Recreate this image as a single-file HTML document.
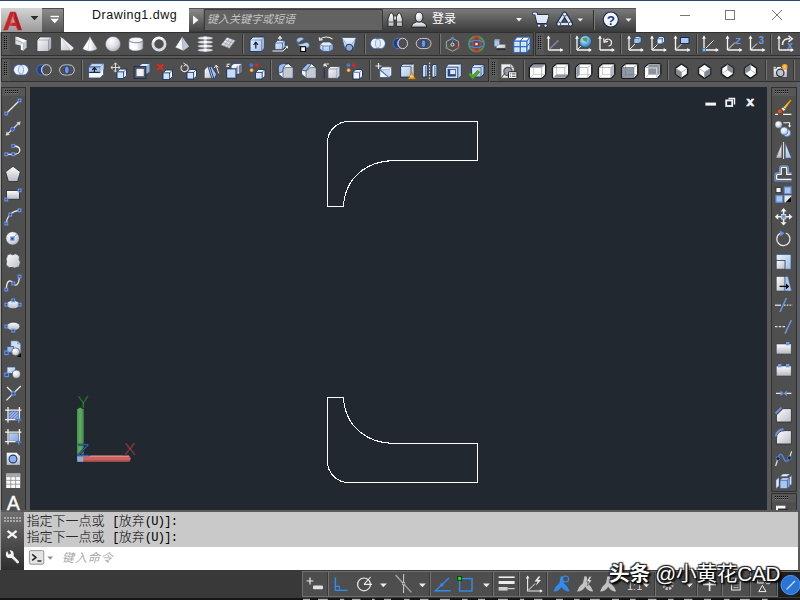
<!DOCTYPE html><html lang="zh"><head><meta charset="utf-8"><title>Drawing1.dwg</title><style>
*{box-sizing:border-box;margin:0;padding:0}
html,body{width:800px;height:600px;overflow:hidden;background:#5a5a5a;font-family:"Liberation Sans","Noto Sans CJK SC",sans-serif}
.abs{position:absolute}
#top{left:0;top:0;width:800px;height:32px;background:#fff}
#topline{left:0;top:0;width:800px;height:1px;background:#2b4a6e}
#abtn{left:1px;top:8px;width:41px;height:24px;background:linear-gradient(#d4d4d4,#9a9a9a)}
#qbtn{left:42px;top:8px;width:22px;height:24px;background:linear-gradient(#8c8c8c,#555);border-top:1px solid #4c4c4c;border-right:1px solid #4c4c4c}
#title{left:92px;top:8.3px;font-size:12.5px;line-height:14px;letter-spacing:0.5px;color:#111}
#info{left:189px;top:8px;width:447px;height:24px;background:linear-gradient(#7a7a7a,#3a3a3a);border-top:1px solid #555}
#sarrow{left:189px;top:9px;width:14px;height:22px;background:linear-gradient(#8a8a8a,#444)}
#sbox{left:204px;top:9px;width:179px;height:22px;background:#626262;border:1px solid #3c3c3c;color:#c4c4c4;font-size:11px;font-style:italic;line-height:18.5px;padding-left:2px;white-space:nowrap}
#login{left:432px;top:11px;font-size:12px;color:#fff;line-height:17px}
.tb{background:#4f4f4f;border:1px solid #303030;height:24px}
.grip{width:5px;height:15px;background-image:radial-gradient(circle,#1c1c1c 0.7px,transparent 0.9px);background-size:2px 2px}
.gripbg{background:#585858}
.sep{background:#353535;border-right:1px solid #747474;width:2px}
#draw{left:30px;top:87px;width:737px;height:423px;background:#212830}
#ltb{left:1px;top:87px;width:25px;height:426px;background:#4f4f4f;border:1px solid #303030}
#rtb{left:771px;top:87px;width:26px;height:405px;background:#4f4f4f;border:1px solid #303030}
#rtb2{left:771px;top:493px;width:26px;height:20px;background:#4f4f4f;border:1px solid #303030}
#cmdl{left:1px;top:512px;width:23px;height:58px;background:linear-gradient(#707070,#2e2e2e)}
#hist{left:24px;top:512px;width:774px;height:35px;background:#c9c9c9;color:#000;font-weight:300;font-size:13px;line-height:15px;padding:2.3px 0 0 2.5px;white-space:pre;font-family:"Liberation Mono","Noto Sans CJK SC",monospace}
#hist i{font-style:normal;font-size:12px;letter-spacing:-0.7px}
#inp{left:24px;top:547px;width:774px;height:23px;background:#fff}
#inptxt{left:62px;top:549px;font-size:12px;font-style:italic;color:#a8a8a8;line-height:18px;letter-spacing:0.9px}
#status{left:0;top:570px;width:800px;height:30px;background:#393939}
#sbar{left:302px;top:571px;width:498px;height:26px;background:#4e4e4e;border:1px solid #707070;border-right:0}
#wm{left:609px;top:559px;font-size:20.6px;color:#fff;white-space:nowrap;line-height:30px;text-shadow:1px 1px 1px #000,-1px -1px 1px #222,1px -1px 1px #222,-1px 1px 1px #222,2px 2px 2px #000;letter-spacing:-0.2px}
svg{position:absolute;left:0;top:0;overflow:visible}
</style></head><body>
<div class="abs" style="left:0;top:32px;width:1px;height:568px;background:#a0a0a0"></div><div class="abs" style="left:797px;top:32px;width:3px;height:480px;background:#5c6066"></div>
<div class="abs" id="top"></div><div class="abs" id="topline"></div>
<div class="abs" id="abtn"></div><div class="abs" id="qbtn"></div>
<div class="abs" id="title">Drawing1.dwg</div>
<div class="abs" id="info"></div><div class="abs" id="sarrow"></div><div class="abs" id="sbox">键入关键字或短语</div>
<div class="abs" id="login">登录</div>
<div class="abs tb" style="left:1px;top:32px;width:533px;height:24px"></div>
<div class="abs tb" style="left:535px;top:32px;width:270px;height:24px"></div>
<div class="abs tb" style="left:1px;top:58px;width:488px;height:24px"></div>
<div class="abs tb" style="left:490px;top:58px;width:315px;height:24px"></div>
<div class="abs sep" style="left:242px;top:34px;height:20px"></div>
<div class="abs sep" style="left:364px;top:34px;height:20px"></div>
<div class="abs sep" style="left:439px;top:34px;height:20px"></div>
<div class="abs sep" style="left:569px;top:34px;height:20px"></div>
<div class="abs sep" style="left:620px;top:34px;height:20px"></div>
<div class="abs sep" style="left:696px;top:34px;height:20px"></div>
<div class="abs sep" style="left:770px;top:34px;height:20px"></div>
<div class="abs sep" style="left:81px;top:60px;height:20px"></div>
<div class="abs sep" style="left:270px;top:60px;height:20px"></div>
<div class="abs sep" style="left:369px;top:60px;height:20px"></div>
<div class="abs sep" style="left:523px;top:60px;height:20px"></div>
<div class="abs sep" style="left:667px;top:60px;height:20px"></div>
<div class="abs sep" style="left:765px;top:60px;height:20px"></div>
<div class="abs sep" style="left:793px;top:60px;height:20px"></div>
<div class="abs" id="draw"></div>
<div class="abs" id="ltb"></div><div class="abs" id="rtb"></div><div class="abs" id="rtb2"></div>
<div class="abs" style="left:1px;top:510px;width:799px;height:2px;background:#5a5a5a"></div>
<div class="abs" id="cmdl"></div>
<div class="abs" id="hist">指定下一点或 <i>[</i>放弃<i>(U)]:</i>
指定下一点或 <i>[</i>放弃<i>(U)]:</i></div>
<div class="abs" id="inp"></div><div class="abs" id="inptxt">键入命令</div>
<div class="abs" id="status"></div><div class="abs" id="sbar"></div>
<svg width="800" height="600" viewBox="0 0 800 600">
<defs>
<linearGradient id="gW" x1="0" y1="0" x2="1" y2="1"><stop offset="0" stop-color="#ffffff"/><stop offset="1" stop-color="#b9bdc6"/></linearGradient>
<linearGradient id="gWv" x1="0" y1="0" x2="0" y2="1"><stop offset="0" stop-color="#ffffff"/><stop offset="1" stop-color="#b4b8c2"/></linearGradient>
<linearGradient id="gWh" x1="0" y1="0" x2="1" y2="0"><stop offset="0" stop-color="#fafafa"/><stop offset="0.5" stop-color="#ffffff"/><stop offset="1" stop-color="#b4b8c2"/></linearGradient>
<linearGradient id="gB" x1="0" y1="0" x2="1" y2="1"><stop offset="0" stop-color="#eef5fd"/><stop offset="1" stop-color="#9ebde8"/></linearGradient>
<linearGradient id="gBv" x1="0" y1="0" x2="0" y2="1"><stop offset="0" stop-color="#f2f7fd"/><stop offset="1" stop-color="#a9c4ea"/></linearGradient>
<radialGradient id="gS" cx="0.38" cy="0.32" r="0.7"><stop offset="0" stop-color="#ffffff"/><stop offset="0.6" stop-color="#dcdee4"/><stop offset="1" stop-color="#a9adb8"/></radialGradient>
<radialGradient id="gSb" cx="0.38" cy="0.32" r="0.7"><stop offset="0" stop-color="#ffffff"/><stop offset="0.6" stop-color="#cfe0f6"/><stop offset="1" stop-color="#8fb0e0"/></radialGradient>
<radialGradient id="gGlobe" cx="0.4" cy="0.35" r="0.7"><stop offset="0" stop-color="#d8f0ff"/><stop offset="0.6" stop-color="#5fa6d8"/><stop offset="1" stop-color="#2b6aa0"/></radialGradient>
<linearGradient id="gBrush" x1="0" y1="1" x2="1" y2="0"><stop offset="0" stop-color="#f7d56a"/><stop offset="1" stop-color="#c98a1c"/></linearGradient>
</defs>
<rect x="2" y="33" width="8" height="22" fill="#575757"/><rect x="4" y="36" width="1" height="1" fill="#101010"/><rect x="5" y="37" width="1" height="1" fill="#6e6e6e"/><rect x="6" y="36" width="1" height="1" fill="#101010"/><rect x="7" y="37" width="1" height="1" fill="#6e6e6e"/><rect x="4" y="38" width="1" height="1" fill="#101010"/><rect x="5" y="39" width="1" height="1" fill="#6e6e6e"/><rect x="6" y="38" width="1" height="1" fill="#101010"/><rect x="7" y="39" width="1" height="1" fill="#6e6e6e"/><rect x="4" y="40" width="1" height="1" fill="#101010"/><rect x="5" y="41" width="1" height="1" fill="#6e6e6e"/><rect x="6" y="40" width="1" height="1" fill="#101010"/><rect x="7" y="41" width="1" height="1" fill="#6e6e6e"/><rect x="4" y="42" width="1" height="1" fill="#101010"/><rect x="5" y="43" width="1" height="1" fill="#6e6e6e"/><rect x="6" y="42" width="1" height="1" fill="#101010"/><rect x="7" y="43" width="1" height="1" fill="#6e6e6e"/><rect x="4" y="44" width="1" height="1" fill="#101010"/><rect x="5" y="45" width="1" height="1" fill="#6e6e6e"/><rect x="6" y="44" width="1" height="1" fill="#101010"/><rect x="7" y="45" width="1" height="1" fill="#6e6e6e"/><rect x="4" y="46" width="1" height="1" fill="#101010"/><rect x="5" y="47" width="1" height="1" fill="#6e6e6e"/><rect x="6" y="46" width="1" height="1" fill="#101010"/><rect x="7" y="47" width="1" height="1" fill="#6e6e6e"/><rect x="4" y="48" width="1" height="1" fill="#101010"/><rect x="5" y="49" width="1" height="1" fill="#6e6e6e"/><rect x="6" y="48" width="1" height="1" fill="#101010"/><rect x="7" y="49" width="1" height="1" fill="#6e6e6e"/><rect x="536" y="33" width="8" height="22" fill="#575757"/><rect x="538" y="36" width="1" height="1" fill="#101010"/><rect x="539" y="37" width="1" height="1" fill="#6e6e6e"/><rect x="540" y="36" width="1" height="1" fill="#101010"/><rect x="541" y="37" width="1" height="1" fill="#6e6e6e"/><rect x="538" y="38" width="1" height="1" fill="#101010"/><rect x="539" y="39" width="1" height="1" fill="#6e6e6e"/><rect x="540" y="38" width="1" height="1" fill="#101010"/><rect x="541" y="39" width="1" height="1" fill="#6e6e6e"/><rect x="538" y="40" width="1" height="1" fill="#101010"/><rect x="539" y="41" width="1" height="1" fill="#6e6e6e"/><rect x="540" y="40" width="1" height="1" fill="#101010"/><rect x="541" y="41" width="1" height="1" fill="#6e6e6e"/><rect x="538" y="42" width="1" height="1" fill="#101010"/><rect x="539" y="43" width="1" height="1" fill="#6e6e6e"/><rect x="540" y="42" width="1" height="1" fill="#101010"/><rect x="541" y="43" width="1" height="1" fill="#6e6e6e"/><rect x="538" y="44" width="1" height="1" fill="#101010"/><rect x="539" y="45" width="1" height="1" fill="#6e6e6e"/><rect x="540" y="44" width="1" height="1" fill="#101010"/><rect x="541" y="45" width="1" height="1" fill="#6e6e6e"/><rect x="538" y="46" width="1" height="1" fill="#101010"/><rect x="539" y="47" width="1" height="1" fill="#6e6e6e"/><rect x="540" y="46" width="1" height="1" fill="#101010"/><rect x="541" y="47" width="1" height="1" fill="#6e6e6e"/><rect x="538" y="48" width="1" height="1" fill="#101010"/><rect x="539" y="49" width="1" height="1" fill="#6e6e6e"/><rect x="540" y="48" width="1" height="1" fill="#101010"/><rect x="541" y="49" width="1" height="1" fill="#6e6e6e"/><rect x="2" y="59" width="8" height="22" fill="#575757"/><rect x="4" y="62" width="1" height="1" fill="#101010"/><rect x="5" y="63" width="1" height="1" fill="#6e6e6e"/><rect x="6" y="62" width="1" height="1" fill="#101010"/><rect x="7" y="63" width="1" height="1" fill="#6e6e6e"/><rect x="4" y="64" width="1" height="1" fill="#101010"/><rect x="5" y="65" width="1" height="1" fill="#6e6e6e"/><rect x="6" y="64" width="1" height="1" fill="#101010"/><rect x="7" y="65" width="1" height="1" fill="#6e6e6e"/><rect x="4" y="66" width="1" height="1" fill="#101010"/><rect x="5" y="67" width="1" height="1" fill="#6e6e6e"/><rect x="6" y="66" width="1" height="1" fill="#101010"/><rect x="7" y="67" width="1" height="1" fill="#6e6e6e"/><rect x="4" y="68" width="1" height="1" fill="#101010"/><rect x="5" y="69" width="1" height="1" fill="#6e6e6e"/><rect x="6" y="68" width="1" height="1" fill="#101010"/><rect x="7" y="69" width="1" height="1" fill="#6e6e6e"/><rect x="4" y="70" width="1" height="1" fill="#101010"/><rect x="5" y="71" width="1" height="1" fill="#6e6e6e"/><rect x="6" y="70" width="1" height="1" fill="#101010"/><rect x="7" y="71" width="1" height="1" fill="#6e6e6e"/><rect x="4" y="72" width="1" height="1" fill="#101010"/><rect x="5" y="73" width="1" height="1" fill="#6e6e6e"/><rect x="6" y="72" width="1" height="1" fill="#101010"/><rect x="7" y="73" width="1" height="1" fill="#6e6e6e"/><rect x="4" y="74" width="1" height="1" fill="#101010"/><rect x="5" y="75" width="1" height="1" fill="#6e6e6e"/><rect x="6" y="74" width="1" height="1" fill="#101010"/><rect x="7" y="75" width="1" height="1" fill="#6e6e6e"/><rect x="490" y="59" width="8" height="22" fill="#575757"/><rect x="492" y="62" width="1" height="1" fill="#101010"/><rect x="493" y="63" width="1" height="1" fill="#6e6e6e"/><rect x="494" y="62" width="1" height="1" fill="#101010"/><rect x="495" y="63" width="1" height="1" fill="#6e6e6e"/><rect x="492" y="64" width="1" height="1" fill="#101010"/><rect x="493" y="65" width="1" height="1" fill="#6e6e6e"/><rect x="494" y="64" width="1" height="1" fill="#101010"/><rect x="495" y="65" width="1" height="1" fill="#6e6e6e"/><rect x="492" y="66" width="1" height="1" fill="#101010"/><rect x="493" y="67" width="1" height="1" fill="#6e6e6e"/><rect x="494" y="66" width="1" height="1" fill="#101010"/><rect x="495" y="67" width="1" height="1" fill="#6e6e6e"/><rect x="492" y="68" width="1" height="1" fill="#101010"/><rect x="493" y="69" width="1" height="1" fill="#6e6e6e"/><rect x="494" y="68" width="1" height="1" fill="#101010"/><rect x="495" y="69" width="1" height="1" fill="#6e6e6e"/><rect x="492" y="70" width="1" height="1" fill="#101010"/><rect x="493" y="71" width="1" height="1" fill="#6e6e6e"/><rect x="494" y="70" width="1" height="1" fill="#101010"/><rect x="495" y="71" width="1" height="1" fill="#6e6e6e"/><rect x="492" y="72" width="1" height="1" fill="#101010"/><rect x="493" y="73" width="1" height="1" fill="#6e6e6e"/><rect x="494" y="72" width="1" height="1" fill="#101010"/><rect x="495" y="73" width="1" height="1" fill="#6e6e6e"/><rect x="492" y="74" width="1" height="1" fill="#101010"/><rect x="493" y="75" width="1" height="1" fill="#6e6e6e"/><rect x="494" y="74" width="1" height="1" fill="#101010"/><rect x="495" y="75" width="1" height="1" fill="#6e6e6e"/><g transform="translate(13,36)"><path d="M2.4 0.8 L13.6 4.4 L13.6 11.4 L10.4 14.8 L7.8 13.8 L7.8 9.4 L2.4 8.2 Z" fill="#f4f5f8" stroke="#3a3f48" stroke-width="0.9" stroke-linejoin="round"/><path d="M2.4 0.8 L13.6 4.4 L10.4 7 L7.8 9.4 L2.4 8.2 Z" fill="#d9dce3"/><path d="M2.4 0.8 L4.6 0.9 L13.6 4.4 L10.4 7 Z" fill="#fdfdfe"/><path d="M10.4 7 L13.6 4.4 L13.6 11.4 L10.4 14.8 Z" fill="#c4c8d2"/><path d="M7.8 9.4 L10.4 7 L10.4 14.8 L7.8 13.8 Z" fill="#fafbfc"/><path d="M10.4 7 L10.4 14.8 M10.4 7 L2.6 4" fill="none" stroke="#8a8f99" stroke-width="0.6"/></g><g transform="translate(36,36)"><path d="M1 4 L4 1 L15.5 1 L15.5 12 L12.5 15.5 L1 15.5 Z" fill="url(#gW)" stroke="#3a3f48" stroke-width="0.8" stroke-linejoin="round"/><path d="M1 4 L12.5 4 L12.5 15.5 M12.5 4 L15.5 1" fill="none" stroke="#3a3f48" stroke-width="0.6400000000000001" opacity="0.55"/><path d="M12.5 4 L15.5 1 L15.5 12 L12.5 15.5 Z" fill="#8f95a3" opacity="0.45"/></g><g transform="translate(59,36)"><path d="M1.5 1 L4 2.5 L15 12 L12 14.8 L1.5 14.8 Z" fill="url(#gW)" stroke="#4a4f58" stroke-width="0.8" stroke-linejoin="round"/><path d="M1.5 1 L12 14.8" stroke="#a8acb6" stroke-width="0.7"/><path d="M1.5 1 L4 2.5 L15 12 L12 14.8 Z" fill="#fff" opacity="0.6"/></g><g transform="translate(82,36)"><path d="M8 0.8 L15.3 12.2 A7.3 3 0 0 1 0.7 12.2 Z" fill="url(#gWh)" stroke="#50555e" stroke-width="0.7" stroke-linejoin="round"/><path d="M8 0.8 L6 14.9" stroke="#d0d3da" stroke-width="0.8"/></g><g transform="translate(105,36)"><circle cx="8" cy="8" r="7.6" fill="url(#gS)" stroke="#5a5f68" stroke-width="0.6"/></g><g transform="translate(128,36)"><path d="M0.8 4 L0.8 12 A7.2 3 0 0 0 15.2 12 L15.2 4 Z" fill="url(#gWh)" stroke="#50555e" stroke-width="0.7"/><ellipse cx="8" cy="4" rx="7.2" ry="2.8" fill="#f4f5f8" stroke="#50555e" stroke-width="0.7"/><rect x="4" y="7" width="2.5" height="7.5" fill="#fff" opacity="0.7"/></g><g transform="translate(151,36)"><circle cx="8" cy="8" r="6.1" fill="none" stroke="#4a4f58" stroke-width="4"/><circle cx="8" cy="8" r="6.1" fill="none" stroke="#d9dbe1" stroke-width="2.8"/><path d="M2.6 5.2 A6.1 6.1 0 0 1 11 2.7" fill="none" stroke="#fff" stroke-width="2.2" stroke-linecap="round"/></g><g transform="translate(174,36)"><path d="M8 0.8 L15 10.5 L9 14.8 L1 11.5 Z" fill="#f6f7f9" stroke="#4a4f58" stroke-width="0.7" stroke-linejoin="round"/><path d="M8 0.8 L15 10.5 L9 14.8 Z" fill="#c2c6d0"/><path d="M8 0.8 L9 14.8" stroke="#8a8f99" stroke-width="0.6"/></g><g transform="translate(197,36)"><rect x="7" y="0.5" width="2.6" height="15.5" fill="url(#gWh)" stroke="#6a6f78" stroke-width="0.4"/><ellipse cx="8.3" cy="2.2" rx="7.6" ry="1.6" fill="#dfe1e6" stroke="#6f747d" stroke-width="0.4"/><rect x="6.6" y="0.8000000000000003" width="3.4" height="2.4" fill="#fff" opacity="0.85"/><ellipse cx="8.3" cy="6.2" rx="7.6" ry="1.6" fill="#dfe1e6" stroke="#6f747d" stroke-width="0.4"/><rect x="6.6" y="4.800000000000001" width="3.4" height="2.4" fill="#fff" opacity="0.85"/><ellipse cx="8.3" cy="10.2" rx="7.6" ry="1.6" fill="#dfe1e6" stroke="#6f747d" stroke-width="0.4"/><rect x="6.6" y="8.799999999999999" width="3.4" height="2.4" fill="#fff" opacity="0.85"/><ellipse cx="8.3" cy="14.2" rx="7.6" ry="1.6" fill="#dfe1e6" stroke="#6f747d" stroke-width="0.4"/><rect x="6.6" y="12.799999999999999" width="3.4" height="2.4" fill="#fff" opacity="0.85"/></g><g transform="translate(220,36)"><path d="M0.8 9 L7 1.2 L15.5 4.5 L9.5 12.5 Z" fill="url(#gW)" stroke="#5a5f68" stroke-width="0.7" stroke-linejoin="round"/><path d="M2.9 6.4 L11.5 9.8 M5 3.8 L13.5 7.2 M3.8 10.2 L10 2.4 M6.7 11.4 L12.8 3.5" stroke="#8d929c" stroke-width="0.6"/></g><g transform="translate(249,36)"><path d="M1 4 L4 1 L15.5 1 L15.5 12 L12.5 15.5 L1 15.5 Z" fill="url(#gB)" stroke="#1f3f78" stroke-width="1.0" stroke-linejoin="round"/><path d="M1 4 L12.5 4 L12.5 15.5 M12.5 4 L15.5 1" fill="none" stroke="#1f3f78" stroke-width="0.8" opacity="0.55"/><path d="M12.5 4 L15.5 1 L15.5 12 L12.5 15.5 Z" fill="#8f95a3" opacity="0.45"/><path d="M6.8 12.5 L6.8 6.8 M4.6 8.8 L6.8 6.2 L9 8.8" fill="none" stroke="#10203c" stroke-width="1.2"/></g><g transform="translate(272,36)"><path d="M3 7 L5.5 4.5 L13 4.5 L13 11 L10.5 13.5 L3 13.5 Z" fill="url(#gB)" stroke="#31507f" stroke-width="0.8"/><path d="M3 7 L10.5 7 L10.5 13.5 M10.5 7 L13 4.5" fill="none" stroke="#31507f" stroke-width="0.7"/><path d="M8 4.3 L8 0.8 M6.2 2.6 L8 0.6 L9.8 2.6" fill="none" stroke="#f2f2f2" stroke-width="1.1"/><path d="M0.5 15 L11 15 M11 15 L15.5 10.5 M13.6 10.4 L15.6 10.3 L15.4 12.4" fill="none" stroke="#f2f2f2" stroke-width="1"/></g><g transform="translate(295,36)"><path d="M1.5 5 C1.5 0.5 8 0.5 9 3 L3 7 Z" fill="#a9c3e6" stroke="#3b5a8c" stroke-width="0.7"/><path d="M1.5 5 C2 9 6 8.5 9 7 C12 5.5 14.5 7 14.5 9.5 C14.5 12 11 12.5 9 11.5 C6 10 3 10.5 3 7 Z" fill="url(#gB)" stroke="#3b5a8c" stroke-width="0.7"/><path d="M9 3 C12 2.5 15 4 14.5 9" fill="none" stroke="#3b5a8c" stroke-width="0.7"/><rect x="5.7" y="10.7" width="4.8" height="4.8" fill="#fff" stroke="#000" stroke-width="1.1"/></g><g transform="translate(318,36)"><path d="M2 3.4 C5 0.2 11 0.2 14.5 3.2" fill="none" stroke="#f2f2f2" stroke-width="1.1"/><path d="M1.2 1.2 L1.6 4.2 L4.6 3.6" fill="none" stroke="#f2f2f2" stroke-width="1.1"/><path d="M1.8 8.5 L5 6 L11.5 6 L15 8.5 L15 13 L11.5 15.5 L5 15.5 L1.8 13 Z" fill="url(#gBv)" stroke="#36527f" stroke-width="0.8"/><path d="M1.8 8.5 L5 10 L11.5 10 L15 8.5 M5 10 L5 15.5 M11.5 10 L11.5 15.5" fill="none" stroke="#36527f" stroke-width="0.6"/><path d="M11.5 10 L15 8.5 L15 13 L11.5 15.5 Z" fill="#7b9bcc" opacity="0.7"/></g><g transform="translate(341,36)"><path d="M0.8 1.5 L15.2 1.5 L12.6 12 C12 15 4.5 15 3.6 12 Z" fill="url(#gBv)" stroke="#36527f" stroke-width="0.8"/><path d="M0.8 1.5 L5.5 8.5 M15.2 1.5 L11 8.5" stroke="#5f7fb2" stroke-width="0.6"/><circle cx="8.2" cy="11.8" r="3.6" fill="#8eaad6" stroke="#1f3357" stroke-width="1"/></g><g transform="translate(370.3,37.8)"><g transform="scale(0.87,0.87)"><ellipse cx="6" cy="6.5" rx="5.6" ry="6" fill="#e9f1fc" stroke="#3e67b3" stroke-width="1"/><ellipse cx="11.5" cy="6.5" rx="5.6" ry="6" fill="#e9f1fc" stroke="#3e67b3" stroke-width="1"/><ellipse cx="8.75" cy="6.5" rx="7.8" ry="5.2" fill="#edf3fc"/><ellipse cx="8.75" cy="6.5" rx="2.9" ry="5" fill="#dfe9f8" stroke="#6f93d6" stroke-width="0.8"/></g></g><g transform="translate(392.7,37.8)"><g transform="scale(0.87,0.87)"><ellipse cx="6" cy="6.5" rx="5.6" ry="6" fill="#1e3f86" stroke="#4d78c7" stroke-width="1"/><ellipse cx="11.5" cy="6.5" rx="5.6" ry="6" fill="#4f4f4f" stroke="#e1e4ea" stroke-width="1"/><path d="M8.75 1.3 A5.6 6 0 0 0 8.75 11.7" fill="none" stroke="#c9d4e8" stroke-width="0.9"/></g></g><g transform="translate(415.7,37.8)"><g transform="scale(0.87,0.87)"><rect x="0.6" y="0.8" width="17" height="11.6" rx="5.8" fill="none" stroke="#d5d8de" stroke-width="1"/><ellipse cx="9" cy="6.6" rx="2.7" ry="4.5" fill="#6d96dc" stroke="#1f3f86" stroke-width="1.2"/></g></g><g transform="translate(444,35)"><path d="M8.5 3.4 L14.6 6.5 L14.6 13 L8.5 16.2 L2.4 13 L2.4 6.5 Z" fill="none" stroke="#c9bfc4" stroke-width="0.8"/><path d="M8.5 9.6 L8.5 3" stroke="#4d88e6" stroke-width="1.1" stroke-dasharray="1.6 0.9"/><path d="M8.5 9.6 L3 12.4" stroke="#3fa648" stroke-width="0.9" stroke-dasharray="1.4 1"/><path d="M8.5 9.6 L14 12.4" stroke="#d43a2f" stroke-width="0.9" stroke-dasharray="1.4 1"/><circle cx="8.5" cy="2.8" r="1.2" fill="#4d88e6"/><circle cx="2.6" cy="12.8" r="1.2" fill="#3fa648"/><circle cx="14.4" cy="12.8" r="1.2" fill="#d43a2f"/><circle cx="8.5" cy="9.6" r="1.5" fill="#4f4f4f" stroke="#f0f0f0" stroke-width="0.9"/></g><g transform="translate(468,35)"><circle cx="8.5" cy="9" r="7.5" fill="none" stroke="#3fa648" stroke-width="1.8"/><ellipse cx="8.5" cy="9" rx="3.9" ry="7.6" fill="none" stroke="#d23a30" stroke-width="2"/><ellipse cx="8.5" cy="9" rx="7.6" ry="3.7" fill="none" stroke="#3f86e0" stroke-width="1.2"/><rect x="7.1" y="7.6" width="2.8" height="2.8" fill="#fff" stroke="#a02820" stroke-width="0.5"/></g><g transform="translate(491,36)"><rect x="3.2" y="4.2" width="5.2" height="6" fill="#a9c6ee" stroke="#5f7fb2" stroke-width="0.5"/><path d="M3.2 4.2 L4 3.4 L9 3.4 L8.4 4.2 Z" fill="#d6e4f8"/><path d="M5.4 10 L8.4 8.6 L14.4 8.6 L14.4 12.4 L5.4 12.4 Z" fill="url(#gW)" stroke="#6a6f78" stroke-width="0.5"/><path d="M5.4 12.4 L14.4 12.4 L14.4 13.8 L5.4 13.8 Z" fill="#20242c"/></g><g transform="translate(513,36)"><path d="M0.8 5.2 L4.0 1.2 L10.5 1.2 L7.3 5.2 Z" fill="#f4faff" stroke="#2a62c9" stroke-width="0.9"/><path d="M7.3 5.2 L10.5 1.2 L17.0 1.2 L13.8 5.2 Z" fill="#f4faff" stroke="#2a62c9" stroke-width="0.9"/><path d="M13.8 5.2 L17 1.2000000000000002 L17 6.800000000000001 L13.8 10.8 Z" fill="#cfe3fa" stroke="#2a62c9" stroke-width="0.9"/><path d="M13.8 10.8 L17 6.800000000000001 L17 12.4 L13.8 16.4 Z" fill="#cfe3fa" stroke="#2a62c9" stroke-width="0.9"/><rect x="0.8" y="5.2" width="6.5" height="5.6" fill="#eaf6ff" stroke="#2a62c9" stroke-width="1.1"/><rect x="2.2" y="6.800000000000001" width="3.4" height="2.8" fill="#bfe0fb"/><rect x="7.3" y="5.2" width="6.5" height="5.6" fill="#eaf6ff" stroke="#2a62c9" stroke-width="1.1"/><rect x="8.7" y="6.800000000000001" width="3.4" height="2.8" fill="#bfe0fb"/><rect x="0.8" y="10.8" width="6.5" height="5.6" fill="#eaf6ff" stroke="#2a62c9" stroke-width="1.1"/><rect x="2.2" y="12.4" width="3.4" height="2.8" fill="#bfe0fb"/><rect x="7.3" y="10.8" width="6.5" height="5.6" fill="#eaf6ff" stroke="#2a62c9" stroke-width="1.1"/><rect x="8.7" y="12.4" width="3.4" height="2.8" fill="#bfe0fb"/></g><g transform="translate(546,35)"><path d="M2.5 15 L2.5 1.5 M2.5 15 L16.5 15" fill="none" stroke="#f6f6f6" stroke-width="1.3"/><path d="M0.6 3.8 L2.5 0.6 L4.4 3.8 Z M14.2 13.1 L17.4 15 L14.2 16.9 Z" fill="#f6f6f6"/><path d="M3.6 14 L12.4 5.4" stroke="#7f93c8" stroke-width="1.7" opacity="0.8"/></g><g transform="translate(574.5,35)"><path d="M2.5 15 L2.5 1.5 M2.5 15 L16.5 15" fill="none" stroke="#f6f6f6" stroke-width="1.3"/><path d="M0.6 3.8 L2.5 0.6 L4.4 3.8 Z M14.2 13.1 L17.4 15 L14.2 16.9 Z" fill="#f6f6f6"/><path d="M3 14.5 L8 9.5" stroke="#ececec" stroke-width="1"/><circle cx="11" cy="6.5" r="6" fill="url(#gGlobe)" stroke="#1d4568" stroke-width="0.6"/><path d="M8 3.5 C9.5 2 12 2.2 13 3.5 C12.5 5 13.5 6 12 7 C10.5 6 9.5 6.5 8.8 5.5 Z" fill="#3f9a58" opacity="0.9"/></g><g transform="translate(597.5,35)"><path d="M2.5 15 L2.5 1.5 M2.5 15 L16.5 15" fill="none" stroke="#f6f6f6" stroke-width="1.3"/><path d="M0.6 3.8 L2.5 0.6 L4.4 3.8 Z M14.2 13.1 L17.4 15 L14.2 16.9 Z" fill="#f6f6f6"/><path d="M7 6.2 C9 2.6 14.5 4 14 8.2 C13.8 10 12.5 11 11 11" fill="none" stroke="#ececec" stroke-width="1.2"/><path d="M6.2 3.2 L6.6 7.2 L10.4 6.4" fill="none" stroke="#ececec" stroke-width="1.2"/></g><g transform="translate(626.5,35)"><path d="M2.5 15 L2.5 1.5 M2.5 15 L16.5 15" fill="none" stroke="#f6f6f6" stroke-width="1.3"/><path d="M0.6 3.8 L2.5 0.6 L4.4 3.8 Z M14.2 13.1 L17.4 15 L14.2 16.9 Z" fill="#f6f6f6"/><path d="M3 14.5 L9 8.5" stroke="#ececec" stroke-width="1"/><path d="M7.5 3.6 L9.6 1.5 L14.5 1.5 L14.5 6.4 L12.4 8.5 L7.5 8.5 Z" fill="#dbe8fa" stroke="#1f3f78" stroke-width="0.9"/><path d="M7.5 3.6 L12.4 3.6 L12.4 8.5 M12.4 3.6 L14.5 1.5" fill="none" stroke="#1f3f78" stroke-width="0.7"/><rect x="8.2" y="4.2" width="4" height="3.8" fill="#9fc0ee"/></g><g transform="translate(649.5,35)"><path d="M2.5 15 L2.5 1.5 M2.5 15 L16.5 15" fill="none" stroke="#f6f6f6" stroke-width="1.3"/><path d="M0.6 3.8 L2.5 0.6 L4.4 3.8 Z M14.2 13.1 L17.4 15 L14.2 16.9 Z" fill="#f6f6f6"/><path d="M3 14.5 L9 8.5" stroke="#ececec" stroke-width="1"/><path d="M7.5 3.75 L9.75 1.5 L15.0 1.5 L15.0 6.75 L12.75 9.0 L7.5 9.0 Z" fill="#dbe8fa" stroke="#1f3f78" stroke-width="0.9"/><path d="M7.5 3.75 L12.75 3.75 L12.75 9.0 M12.75 3.75 L15.0 1.5" fill="none" stroke="#1f3f78" stroke-width="0.7"/></g><g transform="translate(673,35)"><path d="M2.5 15 L2.5 1.5 M2.5 15 L16.5 15" fill="none" stroke="#f6f6f6" stroke-width="1.3"/><path d="M0.6 3.8 L2.5 0.6 L4.4 3.8 Z M14.2 13.1 L17.4 15 L14.2 16.9 Z" fill="#f6f6f6"/><path d="M3 14.5 L9 8.5" stroke="#ececec" stroke-width="1"/><rect x="7.5" y="2.5" width="8.5" height="6" fill="#a9c7f2" stroke="#1a2f55" stroke-width="1"/></g><g transform="translate(701.5,35)"><path d="M2.5 15 L2.5 1.5 M2.5 15 L16.5 15" fill="none" stroke="#f6f6f6" stroke-width="1.3"/><path d="M0.6 3.8 L2.5 0.6 L4.4 3.8 Z M14.2 13.1 L17.4 15 L14.2 16.9 Z" fill="#f6f6f6"/><path d="M3 14.5 L12 5.5" stroke="#ececec" stroke-width="1"/><rect x="1" y="13.5" width="3" height="3" fill="#8fb4ee" stroke="#2f5fb5" stroke-width="0.6"/></g><g transform="translate(725,35)"><path d="M2.5 15 L2.5 1.5 M2.5 15 L16.5 15" fill="none" stroke="#f6f6f6" stroke-width="1.3"/><path d="M0.6 3.8 L2.5 0.6 L4.4 3.8 Z M14.2 13.1 L17.4 15 L14.2 16.9 Z" fill="#f6f6f6"/><path d="M3 14.5 L10 7.5" stroke="#ececec" stroke-width="1"/><text x="13.2" y="8.6" text-anchor="middle" font-family="Liberation Sans, sans-serif" font-weight="bold" font-size="9.5" fill="#6b97e6">Z</text></g><g transform="translate(748,35)"><path d="M2.5 15 L2.5 1.5 M2.5 15 L16.5 15" fill="none" stroke="#f6f6f6" stroke-width="1.3"/><path d="M0.6 3.8 L2.5 0.6 L4.4 3.8 Z M14.2 13.1 L17.4 15 L14.2 16.9 Z" fill="#f6f6f6"/><path d="M3 14.5 L9 8.5" stroke="#ececec" stroke-width="1"/><text x="13.4" y="9.2" text-anchor="middle" font-family="Liberation Sans, sans-serif" font-weight="bold" font-size="10" fill="#6b97e6">3</text></g><g transform="translate(776.5,35)"><path d="M2.5 15 L2.5 1.5 M2.5 15 L16.5 15" fill="none" stroke="#f6f6f6" stroke-width="1.3"/><path d="M0.6 3.8 L2.5 0.6 L4.4 3.8 Z M14.2 13.1 L17.4 15 L14.2 16.9 Z" fill="#f6f6f6"/><path d="M6 10 C6 5 9 3.5 13.5 3.8" fill="none" stroke="#ececec" stroke-width="1.5"/><path d="M12 0.8 L15.8 3.8 L12 6.8" fill="none" stroke="#ececec" stroke-width="1.5"/><text x="13.6" y="14.4" text-anchor="middle" font-family="Liberation Sans, sans-serif" font-weight="bold" font-size="10" fill="#6b97e6">x</text></g><g transform="translate(13.4,64.2)"><g transform="scale(0.87,0.87)"><ellipse cx="6" cy="6.5" rx="5.6" ry="6" fill="#e9f1fc" stroke="#3e67b3" stroke-width="1"/><ellipse cx="11.5" cy="6.5" rx="5.6" ry="6" fill="#e9f1fc" stroke="#3e67b3" stroke-width="1"/><ellipse cx="8.75" cy="6.5" rx="7.8" ry="5.2" fill="#edf3fc"/><ellipse cx="8.75" cy="6.5" rx="2.9" ry="5" fill="#dfe9f8" stroke="#6f93d6" stroke-width="0.8"/></g></g><g transform="translate(36.4,64.2)"><g transform="scale(0.87,0.87)"><ellipse cx="6" cy="6.5" rx="5.6" ry="6" fill="#1e3f86" stroke="#4d78c7" stroke-width="1"/><ellipse cx="11.5" cy="6.5" rx="5.6" ry="6" fill="#4f4f4f" stroke="#e1e4ea" stroke-width="1"/><path d="M8.75 1.3 A5.6 6 0 0 0 8.75 11.7" fill="none" stroke="#c9d4e8" stroke-width="0.9"/></g></g><g transform="translate(59,64.2)"><g transform="scale(0.87,0.87)"><rect x="0.6" y="0.8" width="17" height="11.6" rx="5.8" fill="none" stroke="#d5d8de" stroke-width="1"/><ellipse cx="9" cy="6.6" rx="2.7" ry="4.5" fill="#6d96dc" stroke="#1f3f86" stroke-width="1.2"/></g></g><g transform="translate(88,63)"><path d="M0.6 4 L4 0.6 L15.6 0.6 L15.6 11.5 L12.2 15 L0.6 15 Z" fill="#f4f6fa" stroke="#2b477a" stroke-width="0.8"/><path d="M0.6 4 L4 0.6 L15.6 0.6 L12.2 4 Z" fill="#c9dcf6" stroke="#2b477a" stroke-width="0.7"/><rect x="0.6" y="4" width="11.6" height="5.5" fill="#a9c6ee" stroke="#2b477a" stroke-width="0.7"/><path d="M12.2 4 L15.6 0.6 L15.6 6.5 L12.2 9.5 Z" fill="#bcd2f0"/><path d="M1.5 9.3 L11.5 9.3" stroke="#0d1a30" stroke-width="1.1"/><path d="M6.4 9 L6.4 5.2 M4.2 7 L6.4 4.6 L8.6 7" fill="none" stroke="#0d1a30" stroke-width="1.2"/></g><g transform="translate(110.5,62.5)"><path d="M5 0.5 L5 9.5 M0.5 5 L9.5 5" stroke="#d9d9d9" stroke-width="1.1"/><path d="M3.4 2.2 L5 0.3 L6.6 2.2 M3.4 7.8 L5 9.7 L6.6 7.8 M2.2 3.4 L0.3 5 L2.2 6.6 M7.8 3.4 L9.7 5 L7.8 6.6" fill="none" stroke="#d9d9d9" stroke-width="1"/><path d="M6.5 9.35 L9.35 6.5 L16.0 6.5 L16.0 13.15 L13.15 16.0 L6.5 16.0 Z" fill="#f3f6fb" stroke="#1f3a68" stroke-width="1"/><rect x="6.5" y="9.35" width="6.65" height="6.65" fill="#d3e3f8" stroke="#1f3a68" stroke-width="0.9"/><path d="M13.15 9.35 L16.0 6.5" stroke="#1f3a68" stroke-width="0.7"/></g><g transform="translate(133.5,63)"><path d="M5.5 3 L8.5 0.5 L16 0.5 L16 8.5 L13 11 L5.5 11 Z" fill="#dfeafa" stroke="#2b477a" stroke-width="0.9"/><path d="M13 3 L16 0.5 L16 8.5 L13 11 Z" fill="#8fb2e6"/><rect x="0.6" y="3.6" width="11.8" height="11.8" fill="#585f6e" stroke="#1d2f55" stroke-width="1.1"/><rect x="2.6" y="5.6" width="8" height="8" fill="#f2f2f4" stroke="#30394a" stroke-width="0.6"/></g><g transform="translate(156.5,63.5)"><path d="M0.8 0.8 L6.8 6.2 M6.8 0.8 L0.8 6.2" stroke="#e0281c" stroke-width="2"/><path d="M6.5 9.35 L9.35 6.5 L16.0 6.5 L16.0 13.15 L13.15 16.0 L6.5 16.0 Z" fill="#f3f6fb" stroke="#1f3a68" stroke-width="1"/><rect x="6.5" y="9.35" width="6.65" height="6.65" fill="#d3e3f8" stroke="#1f3a68" stroke-width="0.9"/><path d="M13.15 9.35 L16.0 6.5" stroke="#1f3a68" stroke-width="0.7"/></g><g transform="translate(180,63)"><path d="M5.6 1.6 A3.6 3.6 0 1 1 2.2 2.4" fill="none" stroke="#e6e6e6" stroke-width="1.1"/><path d="M3.4 0 L5.9 1.6 L3.6 3.4" fill="none" stroke="#e6e6e6" stroke-width="1"/><path d="M7 9.35 L9.85 6.5 L16.5 6.5 L16.5 13.15 L13.65 16.0 L7 16.0 Z" fill="#f3f6fb" stroke="#1f3a68" stroke-width="1"/><rect x="7" y="9.35" width="6.65" height="6.65" fill="#d3e3f8" stroke="#1f3a68" stroke-width="0.9"/><path d="M13.65 9.35 L16.5 6.5" stroke="#1f3a68" stroke-width="0.7"/></g><g transform="translate(203.5,64.5)"><path d="M0.8 5.5 L4.5 1.8 L8 1.8 L11.5 13.8 L0.8 13.8 Z" fill="url(#gW)" stroke="#4a4f58" stroke-width="0.7"/><path d="M4.5 1.8 L8 1.8 L13 9.5 L11.5 13.8 L8.2 13.8 Z" fill="#a5c3ee" stroke="#1f3a68" stroke-width="0.9"/><path d="M6.3 1.8 L10.3 13.8" stroke="#1f3a68" stroke-width="0.9"/><path d="M15.3 9 L12.6 1.2 M10.8 3.6 L12.4 0.8 L15 2.6" fill="none" stroke="#e6e6e6" stroke-width="1"/></g><g transform="translate(226,63)"><path d="M5 2.8 L8 0.4 L16 0.4 L16 8.5 L13 11 L5 11 Z" fill="#f1f5fb" stroke="#2b477a" stroke-width="0.9"/><path d="M13 2.8 L16 0.4 L16 8.5 L13 11 Z" fill="#6e7a90"/><path d="M10 4.2 L12.4 2.2 L12.4 9 L10 11 Z" fill="#9aa8c0"/><rect x="0.6" y="5.8" width="9.4" height="9.4" fill="#c7dbf5" stroke="#1f3a68" stroke-width="1.1"/><path d="M0.6 1.2 L4.2 1.2 M0.3 3.5 L2.4 1 M0.4 3.6 L3 3.4" fill="none" stroke="#e6e6e6" stroke-width="1"/></g><g transform="translate(249,63)"><circle cx="2.4" cy="2.2" r="1.9" fill="#3f78d8"/><circle cx="7.6" cy="2.2" r="1.9" fill="#d8281e"/><circle cx="2.6" cy="7.2" r="1.9" fill="#f08a1a"/><path d="M2.6 5.6 L2.6 8.8 M1 7.2 L4.2 7.2" stroke="#ffd9a0" stroke-width="0.6"/><path d="M6.5 9.35 L9.35 6.5 L16.0 6.5 L16.0 13.15 L13.15 16.0 L6.5 16.0 Z" fill="#f3f6fb" stroke="#1f3a68" stroke-width="1"/><rect x="6.5" y="9.35" width="6.65" height="6.65" fill="#d3e3f8" stroke="#1f3a68" stroke-width="0.9"/><path d="M13.15 9.35 L16.0 6.5" stroke="#1f3a68" stroke-width="0.7"/></g><g transform="translate(277.5,63)"><path d="M0.8 5.5 C0.8 2 3 0.6 6 0.6 L11 0.6 L15.6 4.5 L15.6 15.2 L5.5 15.2 L0.8 11 Z" fill="#f4f6fa" stroke="#20355c" stroke-width="1"/><path d="M0.8 5.5 C0.8 2 3 0.6 6 0.6 L11 0.6 C8 1.5 5.5 3 5.5 8.5 L0.8 10.5 Z" fill="#9dbdea" stroke="#20355c" stroke-width="0.8"/><path d="M5.5 8.5 C5.5 5 7.5 4.5 10 4.5 L15.6 4.5 L15.6 15.2 L5.5 15.2 Z" fill="#c4c9d2" stroke="#3a4254" stroke-width="0.6"/></g><g transform="translate(300.5,63)"><path d="M0.8 7 L7 0.6 L11 0.6 L15.6 4.5 L15.6 15.2 L5.5 15.2 L0.8 11 Z" fill="#f4f6fa" stroke="#20355c" stroke-width="1"/><path d="M0.8 7 L7 0.6 L11 0.6 L5.5 8 Z" fill="#9dbdea" stroke="#20355c" stroke-width="0.8"/><path d="M5.5 8 L10 4.5 L15.6 4.5 L15.6 15.2 L5.5 15.2 Z" fill="#c4c9d2" stroke="#3a4254" stroke-width="0.6"/></g><g transform="translate(323.5,63)"><path d="M0.8 5.5 L0.8 15.5" stroke="#1f3a68" stroke-width="1.4"/><path d="M0.6 1 L5.4 1 M0.6 1 L0.6 3.6 M0.8 1.2 L3.6 3.6" fill="none" stroke="#e6e6e6" stroke-width="1.2"/><path d="M4.4 6 L7 3.4 L16 3.4 L16 12.8 L13.4 15.4 L4.4 15.4 Z" fill="url(#gW)" stroke="#3a4254" stroke-width="0.8"/><path d="M4.4 6 L13.4 6 L13.4 15.4 M13.4 6 L16 3.4" fill="none" stroke="#6d7484" stroke-width="0.6"/><path d="M13.4 6 L16 3.4 L16 12.8 L13.4 15.4 Z" fill="#c3d4ee" opacity="0.8"/></g><g transform="translate(346,63)"><circle cx="2.4" cy="2.2" r="1.9" fill="#3f78d8"/><circle cx="7.6" cy="2.2" r="1.9" fill="#d8281e"/><circle cx="2.6" cy="7.2" r="1.9" fill="#f08a1a"/><path d="M2.6 5.6 L2.6 8.8 M1 7.2 L4.2 7.2" stroke="#ffd9a0" stroke-width="0.6"/><path d="M7 9.35 L9.85 6.5 L16.5 6.5 L16.5 13.15 L13.65 16.0 L7 16.0 Z" fill="#f3f6fb" stroke="#20355c" stroke-width="1"/><rect x="7" y="9.35" width="6.65" height="6.65" fill="#f1f4f9" stroke="#20355c" stroke-width="0.9"/><path d="M13.65 9.35 L16.5 6.5" stroke="#20355c" stroke-width="0.7"/><path d="M7 9.4 L13.6 9.4 L16.5 6.6" fill="none" stroke="#6fa0e8" stroke-width="1"/></g><g transform="translate(375.5,63)"><path d="M3 0 L3 6 M0 3 L6 3" stroke="#ececec" stroke-width="1.2"/><path d="M4.2 6.5 L7 3.8 L16.2 3.8 L16.2 12 L13.4 14.6 L4.2 14.6 Z" fill="#f3f6fb" stroke="#3a4a68" stroke-width="0.8"/><path d="M4.2 6.5 L13.4 6.5 L13.4 14.6 M13.4 6.5 L16.2 3.8" fill="none" stroke="#6d7c9a" stroke-width="0.6"/><path d="M4.2 6.5 L13.4 6.5 L13.4 14.6 Z" fill="#c7dbf5"/><path d="M4.2 6.5 L13.4 14.6" stroke="#3b6ecb" stroke-width="1.1"/></g><g transform="translate(400,63.5)"><path d="M0.6 3 L3 0.6 L13.6 0.6 L13.6 11 L11 13.6 L0.6 13.6 Z" fill="url(#gB)" stroke="#20355c" stroke-width="1"/><path d="M0.6 3 L11 3 L11 13.6 M11 3 L13.6 0.6" fill="none" stroke="#38507f" stroke-width="0.7"/><path d="M11 3 L13.6 0.6 L13.6 11 L11 13.6 Z" fill="#eef3fb"/><path d="M11.8 3 L11.8 9" stroke="#7a5a1a" stroke-width="0.9"/><path d="M11.8 8.4 L13.6 12.4 L15.4 15.4 L8.2 15.4 L10 12.4 Z" fill="#f5a623" stroke="#b36b00" stroke-width="0.6"/><path d="M10 12.6 L13.6 12.6" stroke="#fff0c8" stroke-width="0.8"/></g><g transform="translate(422,62.5)"><path d="M0.6 3.4 L2.4 2 L5.2 2 L5.2 13 L3.4 14.6 L0.6 14.6 Z" fill="#dfeafa" stroke="#1f3a68" stroke-width="1"/><path d="M3.4 3.4 L3.4 14.6" stroke="#1f3a68" stroke-width="0.7"/><rect x="3.8" y="3" width="1.2" height="10" fill="#8fb2e6"/><path d="M10 3.4 L11.8 2 L14.6 2 L14.6 13 L12.8 14.6 L10 14.6 Z" fill="#dfeafa" stroke="#1f3a68" stroke-width="1"/><path d="M12.8 3.4 L12.8 14.6" stroke="#1f3a68" stroke-width="0.7"/><rect x="13.2" y="3" width="1.2" height="10" fill="#8fb2e6"/><path d="M7.6 0 L7.6 16.5" stroke="#ececec" stroke-width="1" stroke-dasharray="1.6 1.4"/></g><g transform="translate(445,63.5)"><path d="M0.6 3.6 L3.6 0.6 L15.8 0.6 L15.8 12 L12.8 15 L0.6 15 Z" fill="#eaf1fb" stroke="#1f3a68" stroke-width="1"/><path d="M12.8 3.6 L15.8 0.6 L15.8 12 L12.8 15 Z" fill="#b9d0f0"/><rect x="0.6" y="3.6" width="12.2" height="11.4" fill="#cfdff6" stroke="#1f3a68" stroke-width="0.9"/><rect x="3" y="6" width="7.4" height="6.6" fill="#2b4d8e" stroke="#14284c" stroke-width="0.6"/><rect x="5.2" y="6.4" width="5" height="4.2" fill="#dbe7f8"/></g><g transform="translate(468,64)"><path d="M3.6 3.6 L6.6 0.6 L16 0.6 L16 10 L13 13 L3.6 13 Z" fill="url(#gB)" stroke="#1f3a68" stroke-width="1"/><path d="M3.6 3.6 L13 3.6 L13 13 M13 3.6 L16 0.6" fill="none" stroke="#38507f" stroke-width="0.7"/><path d="M0.4 10.6 L2.4 8.6 L4.8 11.2 L9.8 6.2 L11.8 8.2 L4.8 15.6 Z" fill="#4ea52a" stroke="#2f6d14" stroke-width="0.5"/></g><g transform="translate(500.5,63.5)"><path d="M0.6 0.6 L10 0.6 L13.5 4 L13.5 14.5 L0.6 14.5 Z" fill="#ececee" stroke="#6a6a6a" stroke-width="0.6"/><path d="M10 0.6 L10 4 L13.5 4" fill="#c8c8cc" stroke="#6a6a6a" stroke-width="0.5"/><circle cx="7.5" cy="8" r="4.2" fill="#9a9ea6" stroke="#55595f" stroke-width="1.2"/><path d="M0.6 14.5 L5 9" stroke="#55595f" stroke-width="1.2"/><rect x="8" y="8.2" width="8.4" height="6.8" rx="0.8" fill="#f4f4f4" stroke="#222" stroke-width="1"/><path d="M9.6 10.4 L10.6 10.4 M11.6 10.4 L15 10.4 M9.6 12.8 L10.6 12.8 M11.6 12.8 L15 12.8" stroke="#333" stroke-width="0.9"/></g><g transform="translate(528.6,63.2)"><g transform="scale(1.07,1.02)"><path d="M0.8 5 Q0.8 4 1.6 3.4 L4.2 1.2 Q4.8 0.7 5.6 0.7 L14.6 0.7 Q15.8 0.7 15.8 1.9 L15.8 10.4 Q15.8 11.2 15.2 11.8 L12.8 14.2 Q12.2 14.8 11.4 14.8 L2 14.8 Q0.8 14.8 0.8 13.6 Z" fill="#fff" stroke="#1e1e1e" stroke-width="1.6"/><path d="M1.4 4.2 L4.6 1.3 L15.2 1.3 L12.2 4.2 Z" fill="#8f98a3"/><path d="M12.2 4.2 L15.2 1.3 L15.2 11.2 L12.2 14.2 Z" fill="#fff"/><rect x="1.4" y="4.2" width="10.8" height="10" fill="#fff"/><path d="M1.2 4.2 L12.2 4.2 L12.2 14.4 M12.2 4.2 L15.4 1.2" fill="none" stroke="#9aa0a8" stroke-width="0.7"/><path d="M4.4 1.2 L4.4 11.2 L15.4 11.2 M4.4 11.2 L1.2 14.4" fill="none" stroke="#9aa0a8" stroke-width="0.6" opacity="0.8"/></g></g><g transform="translate(551.8,63.2)"><g transform="scale(1.07,1.02)"><path d="M0.8 5 Q0.8 4 1.6 3.4 L4.2 1.2 Q4.8 0.7 5.6 0.7 L14.6 0.7 Q15.8 0.7 15.8 1.9 L15.8 10.4 Q15.8 11.2 15.2 11.8 L12.8 14.2 Q12.2 14.8 11.4 14.8 L2 14.8 Q0.8 14.8 0.8 13.6 Z" fill="#fff" stroke="#1e1e1e" stroke-width="1.6"/><path d="M1.4 4.2 L4.6 1.3 L15.2 1.3 L12.2 4.2 Z" fill="#fff"/><path d="M12.2 4.2 L15.2 1.3 L15.2 11.2 L12.2 14.2 Z" fill="#fff"/><rect x="1.4" y="4.2" width="10.8" height="10" fill="#fff"/><path d="M1.4 14.2 L4.4 11.2 L15.2 11.2 L12.2 14.2 Z" fill="#8f98a3"/><path d="M1.2 4.2 L12.2 4.2 L12.2 14.4 M12.2 4.2 L15.4 1.2" fill="none" stroke="#9aa0a8" stroke-width="0.7"/><path d="M4.4 1.2 L4.4 11.2 L15.4 11.2 M4.4 11.2 L1.2 14.4" fill="none" stroke="#9aa0a8" stroke-width="0.6" opacity="0.8"/></g></g><g transform="translate(574.8,63.2)"><g transform="scale(1.07,1.02)"><path d="M0.8 5 Q0.8 4 1.6 3.4 L4.2 1.2 Q4.8 0.7 5.6 0.7 L14.6 0.7 Q15.8 0.7 15.8 1.9 L15.8 10.4 Q15.8 11.2 15.2 11.8 L12.8 14.2 Q12.2 14.8 11.4 14.8 L2 14.8 Q0.8 14.8 0.8 13.6 Z" fill="#fff" stroke="#1e1e1e" stroke-width="1.6"/><path d="M1.4 4.2 L4.6 1.3 L15.2 1.3 L12.2 4.2 Z" fill="#fff"/><path d="M12.2 4.2 L15.2 1.3 L15.2 11.2 L12.2 14.2 Z" fill="#fff"/><rect x="1.4" y="4.2" width="10.8" height="10" fill="#fff"/><path d="M1.2 4.2 L12.2 4.2 L12.2 14.4 M12.2 4.2 L15.4 1.2" fill="none" stroke="#9aa0a8" stroke-width="0.7"/><path d="M4.4 1.2 L4.4 11.2 L15.4 11.2 M4.4 11.2 L1.2 14.4" fill="none" stroke="#9aa0a8" stroke-width="0.6" opacity="0.8"/><path d="M1.4 4.2 L4.4 1.6 L4.4 11.2 L1.4 14.2 Z" fill="#8f98a3"/></g></g><g transform="translate(597.8,63.2)"><g transform="scale(1.07,1.02)"><path d="M0.8 5 Q0.8 4 1.6 3.4 L4.2 1.2 Q4.8 0.7 5.6 0.7 L14.6 0.7 Q15.8 0.7 15.8 1.9 L15.8 10.4 Q15.8 11.2 15.2 11.8 L12.8 14.2 Q12.2 14.8 11.4 14.8 L2 14.8 Q0.8 14.8 0.8 13.6 Z" fill="#fff" stroke="#1e1e1e" stroke-width="1.6"/><path d="M1.4 4.2 L4.6 1.3 L15.2 1.3 L12.2 4.2 Z" fill="#fff"/><path d="M12.2 4.2 L15.2 1.3 L15.2 11.2 L12.2 14.2 Z" fill="#b9bec6"/><rect x="1.4" y="4.2" width="10.8" height="10" fill="#fff"/><path d="M1.2 4.2 L12.2 4.2 L12.2 14.4 M12.2 4.2 L15.4 1.2" fill="none" stroke="#9aa0a8" stroke-width="0.7"/><path d="M4.4 1.2 L4.4 11.2 L15.4 11.2 M4.4 11.2 L1.2 14.4" fill="none" stroke="#9aa0a8" stroke-width="0.6" opacity="0.8"/></g></g><g transform="translate(620.8,63.2)"><g transform="scale(1.07,1.02)"><path d="M0.8 5 Q0.8 4 1.6 3.4 L4.2 1.2 Q4.8 0.7 5.6 0.7 L14.6 0.7 Q15.8 0.7 15.8 1.9 L15.8 10.4 Q15.8 11.2 15.2 11.8 L12.8 14.2 Q12.2 14.8 11.4 14.8 L2 14.8 Q0.8 14.8 0.8 13.6 Z" fill="#fff" stroke="#1e1e1e" stroke-width="1.6"/><path d="M1.4 4.2 L4.6 1.3 L15.2 1.3 L12.2 4.2 Z" fill="#fff"/><path d="M12.2 4.2 L15.2 1.3 L15.2 11.2 L12.2 14.2 Z" fill="#fff"/><rect x="1.4" y="4.2" width="10.8" height="10" fill="#8f98a3"/><path d="M1.2 4.2 L12.2 4.2 L12.2 14.4 M12.2 4.2 L15.4 1.2" fill="none" stroke="#6e7680" stroke-width="0.7"/><path d="M4.4 1.2 L4.4 11.2 L15.4 11.2 M4.4 11.2 L1.2 14.4" fill="none" stroke="#6e7680" stroke-width="0.6" opacity="0.8"/></g></g><g transform="translate(643.8,63.2)"><g transform="scale(1.07,1.02)"><path d="M0.8 5 Q0.8 4 1.6 3.4 L4.2 1.2 Q4.8 0.7 5.6 0.7 L14.6 0.7 Q15.8 0.7 15.8 1.9 L15.8 10.4 Q15.8 11.2 15.2 11.8 L12.8 14.2 Q12.2 14.8 11.4 14.8 L2 14.8 Q0.8 14.8 0.8 13.6 Z" fill="#fff" stroke="#1e1e1e" stroke-width="1.6"/><path d="M1.4 4.2 L4.6 1.3 L15.2 1.3 L12.2 4.2 Z" fill="#fff"/><path d="M12.2 4.2 L15.2 1.3 L15.2 11.2 L12.2 14.2 Z" fill="#fff"/><rect x="1.4" y="4.2" width="10.8" height="10" fill="#fff"/><rect x="4.4" y="1.6" width="10.4" height="9.4" fill="#8a929c"/><rect x="1.6" y="4.4" width="10.4" height="9.6" fill="none" stroke="#fff" stroke-width="1.2"/><path d="M1.2 4.2 L12.2 4.2 L12.2 14.4 M12.2 4.2 L15.4 1.2" fill="none" stroke="#9aa0a8" stroke-width="0.7"/><path d="M4.4 1.2 L4.4 11.2 L15.4 11.2 M4.4 11.2 L1.2 14.4" fill="none" stroke="#9aa0a8" stroke-width="0.6" opacity="0.8"/></g></g><g transform="translate(675,63.5)"><path d="M6.5 0.5 L12.6 4.6 L12.6 10.6 L6.5 14.8 L0.5 10.6 L0.5 4.6 Z" fill="#fff" stroke="#1e1e1e" stroke-width="1.5" stroke-linejoin="round"/><path d="M0.9 5 L6.5 8.6 L6.5 14.2 L0.9 10.4 Z" fill="#808a96"/><path d="M0.8 4.8 L6.5 8.6 L12.3 4.8 M6.5 8.6 L6.5 14.4" fill="none" stroke="#9aa0a8" stroke-width="0.7"/></g><g transform="translate(698,63.5)"><path d="M6.5 0.5 L12.6 4.6 L12.6 10.6 L6.5 14.8 L0.5 10.6 L0.5 4.6 Z" fill="#fff" stroke="#1e1e1e" stroke-width="1.5" stroke-linejoin="round"/><path d="M12.2 5 L6.5 8.6 L6.5 14.2 L12.2 10.4 Z" fill="#808a96"/><path d="M0.8 4.8 L6.5 8.6 L12.3 4.8 M6.5 8.6 L6.5 14.4" fill="none" stroke="#9aa0a8" stroke-width="0.7"/></g><g transform="translate(721,63.5)"><path d="M6.5 0.5 L12.6 4.6 L12.6 10.6 L6.5 14.8 L0.5 10.6 L0.5 4.6 Z" fill="#fff" stroke="#1e1e1e" stroke-width="1.5" stroke-linejoin="round"/><path d="M6.5 1 L12.2 4.8 L12.2 10 L6.5 6.4 Z" fill="#808a96"/><path d="M0.8 10.4 L6.5 6.4 L12.3 10.4 M6.5 6.4 L6.5 0.8" fill="none" stroke="#9aa0a8" stroke-width="0.7"/></g><g transform="translate(744,63.5)"><path d="M6.5 0.5 L12.6 4.6 L12.6 10.6 L6.5 14.8 L0.5 10.6 L0.5 4.6 Z" fill="#fff" stroke="#1e1e1e" stroke-width="1.5" stroke-linejoin="round"/><path d="M6.5 1 L0.9 4.8 L0.9 10 L6.5 6.4 Z" fill="#808a96"/><path d="M0.8 10.4 L6.5 6.4 L12.3 10.4 M6.5 6.4 L6.5 0.8" fill="none" stroke="#9aa0a8" stroke-width="0.7"/></g><g transform="translate(772.5,65.5)"><path d="M0.6 3 L3.6 3 L4.8 1 L8.4 1 L9.6 3 L14.8 3 L14.8 12 L0.6 12 Z" fill="url(#gWv)" stroke="#3c3c3c" stroke-width="0.8"/><rect x="1" y="1.4" width="2.4" height="1.6" fill="#ddd"/><circle cx="7.8" cy="7.4" r="3.7" fill="#b8c6d6" stroke="#333" stroke-width="1.2"/><circle cx="12.2" cy="1.4" r="2.8" fill="#f5921e"/><path d="M12.2 -1.2 L12.2 4 M9.6 1.4 L14.8 1.4 M10.4 -0.4 L14 3.2 M14 -0.4 L10.4 3.2" stroke="#ffd27a" stroke-width="0.6"/></g><text x="3" y="29.7" font-family="Liberation Sans, sans-serif" font-weight="bold" font-size="26.4" fill="#c5242c" stroke="#c5242c" stroke-width="0.5" textLength="19.4" lengthAdjust="spacingAndGlyphs">A</text><path d="M9 26 L13.5 13 L15 15 L11.5 26 Z" fill="#e8555a" opacity="0.55"/><path d="M16 12 L21.5 29.5 L18.5 29.5 L14 14 Z" fill="#8f1219" opacity="0.55"/><path d="M30.5 16 L38.5 16 L34.5 20.2 Z" fill="#2a2e36"/><rect x="50.5" y="15.8" width="8.5" height="1.4" fill="#fff"/><path d="M50.5 18.8 L59 18.8 L54.75 23.2 Z" fill="#fff"/><path d="M193 15.5 L198.5 20 L193 24.5 Z" fill="#f4f4f4"/><g transform="translate(387,12)"><path d="M1 7 L3 1.5 Q4.2 0.4 5.6 1.5 L7 5 L7 14.4 L1 14.4 Z" fill="url(#gWv)" stroke="#222" stroke-width="0.9"/><path d="M9.4 5 L10.8 1.5 Q12.2 0.4 13.4 1.5 L15.4 7 L15.4 14.4 L9.4 14.4 Z" fill="url(#gWv)" stroke="#222" stroke-width="0.9"/><rect x="6.8" y="4" width="2.8" height="4" fill="#ddd" stroke="#222" stroke-width="0.7"/><path d="M1 10 L7 10 M9.4 10 L15.4 10" stroke="#444" stroke-width="0.8"/></g><g transform="translate(411,11.5)"><path d="M0.6 15.6 C0.6 12 3.5 11.4 5.6 10.4 L10.6 10.4 C12.8 11.4 15.6 12 15.6 15.6 Z" fill="url(#gWv)" stroke="#1e1e1e" stroke-width="0.9"/><ellipse cx="8.1" cy="5.6" rx="3.9" ry="5" fill="url(#gS)" stroke="#1e1e1e" stroke-width="0.9"/></g><path d="M516 18 L522 18 L519 21.4 Z" fill="#f0f0f0"/><g transform="translate(533,12.5)" fill="none" stroke="#16233f" stroke-width="3.4" stroke-linejoin="round" stroke-linecap="round"><path d="M0.6 1 L3 1 L5 9.6 L12.6 9.6 L14.6 3.4 L3.8 3.4"/></g><g transform="translate(533,12.5)" fill="none" stroke="#e4ecfa" stroke-width="1.9" stroke-linejoin="round" stroke-linecap="round"><path d="M0.6 1 L3 1 L5 9.6 L12.6 9.6 L14.6 3.4 L3.8 3.4"/><path d="M4 3.6 L14.2 3.6 L12.4 9.2 L5.2 9.2 Z" fill="#dfe8f8" stroke="none"/></g><circle cx="539" cy="25.6" r="1.7" fill="#d6e2f6" stroke="#16233f" stroke-width="0.8"/><circle cx="545.6" cy="25.6" r="1.7" fill="#d6e2f6" stroke="#16233f" stroke-width="0.8"/><g transform="translate(557,12)"><path d="M7.6 2 L13.8 12 L1.4 12 Z" fill="none" stroke="#16233f" stroke-width="4.6" stroke-linejoin="round"/><path d="M7.6 2 L13.8 12 L1.4 12 Z" fill="none" stroke="#d9e4f6" stroke-width="2.6" stroke-linejoin="round"/><circle cx="7.6" cy="2.2" r="2" fill="#dfe8f8" stroke="#16233f" stroke-width="0.8"/><circle cx="1.8" cy="12" r="2" fill="#dfe8f8" stroke="#16233f" stroke-width="0.8"/><circle cx="13.4" cy="12" r="2" fill="#dfe8f8" stroke="#16233f" stroke-width="0.8"/></g><path d="M577.5 18.4 L583 18.4 L580.25 21.6 Z" fill="#f0f0f0"/><path d="M593.5 10 L593.5 30" stroke="#2e2e2e" stroke-width="1"/><path d="M594.5 10 L594.5 30" stroke="#7a7a7a" stroke-width="1"/><circle cx="610.8" cy="19.6" r="7.6" fill="#f4f6fb" stroke="#1c2c50" stroke-width="1.2"/><text x="610.8" y="24.6" text-anchor="middle" font-family="Liberation Sans, sans-serif" font-weight="bold" font-size="13.5" fill="#1b3a8a">?</text><path d="M625.5 18.4 L631.5 18.4 L628.5 21.8 Z" fill="#f0f0f0"/><path d="M680 15.5 L690 15.5" stroke="#777" stroke-width="1"/><rect x="725.5" y="10.5" width="9" height="9" fill="none" stroke="#777" stroke-width="1"/><path d="M772 10 L782 20 M782 10 L772 20" stroke="#777" stroke-width="1"/><rect x="2" y="88" width="23" height="8" fill="#575757"/><rect x="5" y="90" width="1" height="1" fill="#0c0c0c"/><rect x="5" y="91" width="1" height="1" fill="#7a7a7a"/><rect x="5" y="92" width="1" height="1" fill="#0c0c0c"/><rect x="5" y="93" width="1" height="1" fill="#7a7a7a"/><rect x="7" y="90" width="1" height="1" fill="#0c0c0c"/><rect x="7" y="91" width="1" height="1" fill="#7a7a7a"/><rect x="7" y="92" width="1" height="1" fill="#0c0c0c"/><rect x="7" y="93" width="1" height="1" fill="#7a7a7a"/><rect x="9" y="90" width="1" height="1" fill="#0c0c0c"/><rect x="9" y="91" width="1" height="1" fill="#7a7a7a"/><rect x="9" y="92" width="1" height="1" fill="#0c0c0c"/><rect x="9" y="93" width="1" height="1" fill="#7a7a7a"/><rect x="11" y="90" width="1" height="1" fill="#0c0c0c"/><rect x="11" y="91" width="1" height="1" fill="#7a7a7a"/><rect x="11" y="92" width="1" height="1" fill="#0c0c0c"/><rect x="11" y="93" width="1" height="1" fill="#7a7a7a"/><rect x="13" y="90" width="1" height="1" fill="#0c0c0c"/><rect x="13" y="91" width="1" height="1" fill="#7a7a7a"/><rect x="13" y="92" width="1" height="1" fill="#0c0c0c"/><rect x="13" y="93" width="1" height="1" fill="#7a7a7a"/><rect x="15" y="90" width="1" height="1" fill="#0c0c0c"/><rect x="15" y="91" width="1" height="1" fill="#7a7a7a"/><rect x="15" y="92" width="1" height="1" fill="#0c0c0c"/><rect x="15" y="93" width="1" height="1" fill="#7a7a7a"/><rect x="17" y="90" width="1" height="1" fill="#0c0c0c"/><rect x="17" y="91" width="1" height="1" fill="#7a7a7a"/><rect x="17" y="92" width="1" height="1" fill="#0c0c0c"/><rect x="17" y="93" width="1" height="1" fill="#7a7a7a"/><path d="M6.3 113.5 L19.5 100.5" stroke="#f0f0f0" stroke-width="1.2"/><rect x="4.1" y="111.3" width="4.4" height="4.4" fill="#6a8fdc" opacity="0.35"/><rect x="5.0" y="112.2" width="2.6" height="2.6" fill="#2c4a8c" stroke="#6f98ea" stroke-width="0.9"/><rect x="17.3" y="98.3" width="4.4" height="4.4" fill="#6a8fdc" opacity="0.35"/><rect x="18.2" y="99.2" width="2.6" height="2.6" fill="#2c4a8c" stroke="#6f98ea" stroke-width="0.9"/><path d="M7 134.5 L19.5 122.5" stroke="#d8d8d8" stroke-width="1.2"/><path d="M5.6 135.8 L6.6 131.6 L9.8 134.8 Z M20.6 121.4 L19.6 125.6 L16.4 122.4 Z" fill="#d8d8d8"/><circle cx="12.6" cy="129.2" r="1.9" fill="#3056c8" stroke="#7ea4f4" stroke-width="0.8"/><path d="M6.3 154.3 L13.3 154.3 C22 154.3 22 146 13.3 146" fill="none" stroke="#f0f0f0" stroke-width="1.3"/><rect x="4.1" y="152.1" width="4.4" height="4.4" fill="#6a8fdc" opacity="0.35"/><rect x="5.0" y="153.0" width="2.6" height="2.6" fill="#2c4a8c" stroke="#6f98ea" stroke-width="0.9"/><rect x="11.1" y="152.1" width="4.4" height="4.4" fill="#6a8fdc" opacity="0.35"/><rect x="12.0" y="153.0" width="2.6" height="2.6" fill="#2c4a8c" stroke="#6f98ea" stroke-width="0.9"/><rect x="11.1" y="143.79999999999998" width="4.4" height="4.4" fill="#6a8fdc" opacity="0.35"/><rect x="12.0" y="144.7" width="2.6" height="2.6" fill="#2c4a8c" stroke="#6f98ea" stroke-width="0.9"/><path d="M13 166.3 L20.4 171.8 L17.6 181.6 L8.4 181.6 L5.6 171.8 Z" fill="url(#gWv)" stroke="#2e3138" stroke-width="0.9"/><rect x="6.5" y="190.5" width="13" height="8.8" fill="url(#gWv)" stroke="#2e3138" stroke-width="0.9"/><rect x="17.400000000000002" y="188.2" width="4.4" height="4.4" fill="#6a8fdc" opacity="0.35"/><rect x="18.3" y="189.1" width="2.6" height="2.6" fill="#2c4a8c" stroke="#6f98ea" stroke-width="0.9"/><rect x="4.1" y="197.29999999999998" width="4.4" height="4.4" fill="#6a8fdc" opacity="0.35"/><rect x="5.0" y="198.2" width="2.6" height="2.6" fill="#2c4a8c" stroke="#6f98ea" stroke-width="0.9"/><path d="M6.3 223.5 C6.8 216 12 211 19.5 210.3" fill="none" stroke="#f0f0f0" stroke-width="1.2"/><rect x="4.1" y="221.29999999999998" width="4.4" height="4.4" fill="#6a8fdc" opacity="0.35"/><rect x="5.0" y="222.2" width="2.6" height="2.6" fill="#2c4a8c" stroke="#6f98ea" stroke-width="0.9"/><rect x="8.1" y="212.39999999999998" width="4.4" height="4.4" fill="#6a8fdc" opacity="0.35"/><rect x="9.0" y="213.29999999999998" width="2.6" height="2.6" fill="#2c4a8c" stroke="#6f98ea" stroke-width="0.9"/><rect x="17.3" y="208.1" width="4.4" height="4.4" fill="#6a8fdc" opacity="0.35"/><rect x="18.2" y="209.0" width="2.6" height="2.6" fill="#2c4a8c" stroke="#6f98ea" stroke-width="0.9"/><circle cx="12.6" cy="238.4" r="6.9" fill="url(#gS)" stroke="#3a3d44" stroke-width="0.8"/><path d="M12.4 238.6 L17 234" stroke="#6f9cf0" stroke-width="0.9"/><rect x="10.0" y="236.2" width="4.8" height="4.8" fill="#6a8fdc" opacity="0.35"/><rect x="10.9" y="237.1" width="3" height="3" fill="#2c4a8c" stroke="#6f98ea" stroke-width="0.9"/><path d="M8 254.6 Q10.5 253 12.5 254.8 Q15.5 252.8 18 254.8 Q20.4 256.6 19.2 259.6 Q21.4 262 19.8 264.6 Q20 267.6 16.8 267.4 Q14.4 269 12.4 267.4 Q9.2 268.4 7.4 266.4 Q5 264.4 6.6 261.6 Q5.2 258.6 7 256.8 Q6.8 255.2 8 254.6 Z" fill="url(#gW)" stroke="#3a3d44" stroke-width="0.8"/><path d="M6.3 289.5 C6.5 279 11 279.5 13.3 283.5 C16 287.5 19 284 19.5 276.5" fill="none" stroke="#f0f0f0" stroke-width="1.3"/><rect x="4.1" y="287.3" width="4.4" height="4.4" fill="#6a8fdc" opacity="0.35"/><rect x="5.0" y="288.2" width="2.6" height="2.6" fill="#2c4a8c" stroke="#6f98ea" stroke-width="0.9"/><rect x="11.1" y="281.3" width="4.4" height="4.4" fill="#6a8fdc" opacity="0.35"/><rect x="12.0" y="282.2" width="2.6" height="2.6" fill="#2c4a8c" stroke="#6f98ea" stroke-width="0.9"/><rect x="17.3" y="274.3" width="4.4" height="4.4" fill="#6a8fdc" opacity="0.35"/><rect x="18.2" y="275.2" width="2.6" height="2.6" fill="#2c4a8c" stroke="#6f98ea" stroke-width="0.9"/><ellipse cx="13" cy="304.6" rx="6.6" ry="4.2" fill="url(#gWv)" stroke="#3a3d44" stroke-width="0.7"/><rect x="4.1" y="302.40000000000003" width="4.4" height="4.4" fill="#6a8fdc" opacity="0.35"/><rect x="5.0" y="303.3" width="2.6" height="2.6" fill="#2c4a8c" stroke="#6f98ea" stroke-width="0.9"/><rect x="11.1" y="298.2" width="4.4" height="4.4" fill="#6a8fdc" opacity="0.35"/><rect x="12.0" y="299.09999999999997" width="2.6" height="2.6" fill="#2c4a8c" stroke="#6f98ea" stroke-width="0.9"/><rect x="17.400000000000002" y="302.40000000000003" width="4.4" height="4.4" fill="#6a8fdc" opacity="0.35"/><rect x="18.3" y="303.3" width="2.6" height="2.6" fill="#2c4a8c" stroke="#6f98ea" stroke-width="0.9"/><ellipse cx="13.4" cy="326.4" rx="6.6" ry="4.2" fill="url(#gWv)" stroke="#3a3d44" stroke-width="0.7"/><rect x="4.1" y="324.3" width="4.4" height="4.4" fill="#6a8fdc" opacity="0.35"/><rect x="5.0" y="325.2" width="2.6" height="2.6" fill="#2c4a8c" stroke="#6f98ea" stroke-width="0.9"/><rect x="11.1" y="328.40000000000003" width="4.4" height="4.4" fill="#6a8fdc" opacity="0.35"/><rect x="12.0" y="329.3" width="2.6" height="2.6" fill="#2c4a8c" stroke="#6f98ea" stroke-width="0.9"/><path d="M11 341 L17.4 341 L20.4 344 L20.4 352.6 L11 352.6 Z" fill="#cfe0f6" stroke="#6f8fc0" stroke-width="0.6"/><path d="M17.4 341 L17.4 344 L20.4 344" fill="#9ebde8" stroke="#6f8fc0" stroke-width="0.5"/><rect x="7" y="346.6" width="6.6" height="5.6" fill="#9ebde8" stroke="#35558c" stroke-width="0.8"/><circle cx="15.6" cy="351.8" r="4" fill="url(#gS)" stroke="#4a4d55" stroke-width="0.7"/><path d="M21 353 L21 357 L17 357 Z" fill="#0a0a0a"/><rect x="4.0" y="350.3" width="5.0" height="5.0" fill="#6a8fdc" opacity="0.35"/><rect x="4.9" y="351.2" width="3.2" height="3.2" fill="#2c4a8c" stroke="#6f98ea" stroke-width="0.9"/><rect x="7" y="367" width="8.6" height="6.4" fill="url(#gB)" stroke="#35558c" stroke-width="0.8"/><circle cx="16.4" cy="374.2" r="4.1" fill="url(#gS)" stroke="#4a4d55" stroke-width="0.7"/><rect x="3.9999999999999996" y="372.20000000000005" width="5.2" height="5.2" fill="#6a8fdc" opacity="0.35"/><rect x="4.8999999999999995" y="373.1" width="3.4" height="3.4" fill="#2c4a8c" stroke="#6f98ea" stroke-width="0.9"/><path d="M6.4 400.4 L20.8 386 M7 387 L13.5 393.5" stroke="#f0f0f0" stroke-width="1.2"/><rect x="11.1" y="391.1" width="4.8" height="4.8" fill="#6a8fdc" opacity="0.35"/><rect x="12.0" y="392.0" width="3" height="3" fill="#2c4a8c" stroke="#6f98ea" stroke-width="0.9"/><path d="M8 407 L8 422.5 M19.4 407 L19.4 419 M5 410.2 L21.4 410.2 M5 419.6 L15.6 419.6" stroke="#f0f0f0" stroke-width="1.3"/><rect x="9.2" y="411.4" width="9" height="7.4" fill="#5f87d8"/><path d="M9.2 414.4 L12.2 411.4 M9.2 417.4 L15.2 411.4 M10.6 418.8 L18 411.6 M13.6 418.8 L18.2 414.4 M16.6 418.8 L18.2 417.4" stroke="#dfe9fb" stroke-width="0.8"/><path d="M16 420 L21.6 420 M18.8 417.2 L18.8 422.8" stroke="#5f8fe8" stroke-width="1.2"/><path d="M8 429 L8 444.5 M19.4 429 L19.4 441 M5 432.2 L21.4 432.2 M5 441.6 L15.6 441.6" stroke="#f0f0f0" stroke-width="1.3"/><rect x="9.2" y="433.4" width="9" height="7.4" fill="url(#gB)"/><rect x="9.2" y="433.4" width="9" height="7.4" fill="#5f87d8" opacity="0.35"/><path d="M16 442 L21.6 442 M18.8 439.2 L18.8 444.8" stroke="#5f8fe8" stroke-width="1.2"/><path d="M6.2 452.2 L16.6 452.2 L20.4 456 L20.4 465.4 L6.2 465.4 Z" fill="url(#gWv)" stroke="#3a3d44" stroke-width="0.8"/><circle cx="13" cy="459" r="3.9" fill="#8fb0e6" stroke="#1f3a78" stroke-width="1.1"/><rect x="6.2" y="473.6" width="14" height="14.4" fill="#fafafa"/><rect x="6.2" y="473.6" width="14" height="2.6" fill="#a9a9a9"/><path d="M6.2 476.6 L20.2 476.6 M6.2 480.4 L20.2 480.4 M6.2 484.2 L20.2 484.2 M10.8 476.6 L10.8 488 M15.6 476.6 L15.6 488" stroke="#8a8a8a" stroke-width="0.8"/><text x="13.2" y="510" text-anchor="middle" font-family="Liberation Sans, sans-serif" font-size="19.6" fill="#fff" stroke="#fff" stroke-width="0.3">A</text><rect x="772" y="88" width="24" height="8" fill="#575757"/><rect x="775" y="90" width="1" height="1" fill="#0c0c0c"/><rect x="775" y="91" width="1" height="1" fill="#7a7a7a"/><rect x="775" y="92" width="1" height="1" fill="#0c0c0c"/><rect x="775" y="93" width="1" height="1" fill="#7a7a7a"/><rect x="777" y="90" width="1" height="1" fill="#0c0c0c"/><rect x="777" y="91" width="1" height="1" fill="#7a7a7a"/><rect x="777" y="92" width="1" height="1" fill="#0c0c0c"/><rect x="777" y="93" width="1" height="1" fill="#7a7a7a"/><rect x="779" y="90" width="1" height="1" fill="#0c0c0c"/><rect x="779" y="91" width="1" height="1" fill="#7a7a7a"/><rect x="779" y="92" width="1" height="1" fill="#0c0c0c"/><rect x="779" y="93" width="1" height="1" fill="#7a7a7a"/><rect x="781" y="90" width="1" height="1" fill="#0c0c0c"/><rect x="781" y="91" width="1" height="1" fill="#7a7a7a"/><rect x="781" y="92" width="1" height="1" fill="#0c0c0c"/><rect x="781" y="93" width="1" height="1" fill="#7a7a7a"/><rect x="783" y="90" width="1" height="1" fill="#0c0c0c"/><rect x="783" y="91" width="1" height="1" fill="#7a7a7a"/><rect x="783" y="92" width="1" height="1" fill="#0c0c0c"/><rect x="783" y="93" width="1" height="1" fill="#7a7a7a"/><rect x="785" y="90" width="1" height="1" fill="#0c0c0c"/><rect x="785" y="91" width="1" height="1" fill="#7a7a7a"/><rect x="785" y="92" width="1" height="1" fill="#0c0c0c"/><rect x="785" y="93" width="1" height="1" fill="#7a7a7a"/><rect x="787" y="90" width="1" height="1" fill="#0c0c0c"/><rect x="787" y="91" width="1" height="1" fill="#7a7a7a"/><rect x="787" y="92" width="1" height="1" fill="#0c0c0c"/><rect x="787" y="93" width="1" height="1" fill="#7a7a7a"/><path d="M783 107.4 L790 99.4 Q791.6 98.6 791.8 100.6 L785.2 109.4 Z" fill="url(#gBrush)" stroke="#5a3c0c" stroke-width="0.6"/><path d="M781.4 108.8 L783 107.2 L785.4 109.4 L783.8 111.2 Z" fill="#f4f4f4" stroke="#555" stroke-width="0.4"/><circle cx="779.8" cy="111.4" r="2.3" fill="#e0561c" stroke="#8a2c08" stroke-width="0.5"/><path d="M775 114.4 L778 114.4 M783 114.4 L791.4 114.4" stroke="#f4f4f4" stroke-width="1.2"/><circle cx="778.6" cy="124.6" r="3.6" fill="url(#gS)" stroke="#555a66" stroke-width="0.5"/><circle cx="787" cy="133" r="3.8" fill="url(#gSb)" stroke="#47649a" stroke-width="0.6"/><circle cx="784.2" cy="131" r="3.9" fill="url(#gSb)" stroke="#47649a" stroke-width="0.6"/><path d="M783.4 122.8 L789.6 122.8 L789.6 126" fill="none" stroke="#f0f0f0" stroke-width="1.1"/><path d="M787.8 125.4 L789.6 127.6 L791.4 125.4 Z" fill="#f0f0f0"/><path d="M781.8 143.6 L781.8 158 L775.8 158 Z" fill="url(#gWv)" stroke="#4a4d55" stroke-width="0.5"/><path d="M785.4 143.6 L785.4 158 L791.4 158 Z" fill="url(#gBv)" stroke="#47649a" stroke-width="0.5"/><path d="M783.6 142 L783.6 159" stroke="#e8e8e8" stroke-width="1"/><path d="M791.5 181 L776 181 Q775 181 775 180 L775 175.2 Q775 172.8 777.4 172.8 L779.6 172.8 L779.6 168.6 Q779.6 165.8 782.4 165.8 L785.6 165.8 Q788.4 165.8 788.4 168.6 L788.4 172.8 L791.5 172.8" fill="none" stroke="#6f98e6" stroke-width="1.2"/><path d="M791.5 179.4 L777.2 179.4 Q776.6 179.4 776.6 178.8 L776.6 175.6 Q776.6 174.4 777.8 174.4 L781.2 174.4 L781.2 169 Q781.2 167.4 782.8 167.4 L785.2 167.4 Q786.8 167.4 786.8 169 L786.8 174.4 L791.5 174.4" fill="none" stroke="#f6f8fc" stroke-width="1.3"/><rect x="776" y="187.6" width="5" height="5" fill="#f6f6f6" stroke="#2a2a2a" stroke-width="0.8"/><rect x="784.4" y="187" width="6.6" height="6.6" fill="#a9c6ee" stroke="#5f8fe0" stroke-width="1.2"/><rect x="776" y="195.6" width="6.6" height="6.6" fill="#a9c6ee" stroke="#5f8fe0" stroke-width="1.2"/><rect x="784.4" y="195.4" width="7" height="7" fill="#dfe8f6"/><path d="M791.4 196.4 L791.4 202.4 L785.4 202.4 Z" fill="#0a0a0a"/><path d="M783.6 209.5 L783.6 224 M776 216.8 L791.2 216.8" stroke="#f0f0f0" stroke-width="1.6"/><path d="M780.6 211.4 L783.6 208 L786.6 211.4 Z M780.6 222.2 L783.6 225.6 L786.6 222.2 Z M778.2 213.8 L774.8 216.8 L778.2 219.8 Z M789 213.8 L792.4 216.8 L789 219.8 Z" fill="#f0f0f0"/><rect x="781.4" y="214.6" width="4.4" height="4.4" fill="#6f93d6" stroke="#dfe6f2" stroke-width="0.7"/><path d="M786 233 A6.6 6.6 0 1 1 780 233.4" fill="none" stroke="#e8e8e8" stroke-width="1.3"/><path d="M779.6 230.6 L784.6 233 L780.4 236.4 Z" fill="#5f8fe8"/><rect x="776.2" y="254.4" width="14.8" height="14.8" fill="url(#gB)" stroke="#35558c" stroke-width="0.7"/><rect x="776.2" y="260.4" width="8.8" height="8.8" fill="url(#gW)" stroke="#3a3d44" stroke-width="0.8"/><rect x="776.2" y="276.4" width="8.8" height="14.6" fill="url(#gW)" stroke="#3a3d44" stroke-width="0.6"/><path d="M785 276.4 L788 276.4 L791.6 291 L785 291 Z" fill="#a9c6ee" stroke="#35558c" stroke-width="0.6"/><path d="M779.6 286.4 L788 286.4" stroke="#0a0a0a" stroke-width="1.3"/><path d="M786 283.6 L789.4 286.4 L786 289.2 Z" fill="#0a0a0a"/><path d="M775 305.2 L781 305.2" stroke="#f0f0f0" stroke-width="1.2"/><path d="M784 305.2 L792.6 305.2" stroke="#e0e0e0" stroke-width="1.2" stroke-dasharray="1.6 1.2"/><path d="M780 312 L786.4 298" stroke="#6f93e0" stroke-width="1.5"/><path d="M775 326.6 L785.6 326.6" stroke="#e0e0e0" stroke-width="1.2" stroke-dasharray="2.4 1.4"/><path d="M785 333.6 L791.4 320" stroke="#6f93e0" stroke-width="1.5"/><rect x="776.2" y="344" width="15" height="10" fill="url(#gWv)" stroke="#3a3d44" stroke-width="0.6"/><rect x="786" y="342" width="3.4" height="3.4" fill="#6f9cf0"/><rect x="776.2" y="366" width="15" height="10" fill="url(#gWv)" stroke="#3a3d44" stroke-width="0.6"/><rect x="778" y="364" width="3.4" height="3.4" fill="#6f9cf0"/><rect x="786" y="364" width="3.4" height="3.4" fill="#6f9cf0"/><path d="M776 393.4 L781.4 393.4 M786 393.4 L791.4 393.4" stroke="#e8e8e8" stroke-width="1.2"/><path d="M780.6 390.6 L786.8 396.2 L786.8 390.6 L780.6 396.2 Z" fill="#6f93e0"/><path d="M776.4 422 L776.4 415 L783 408.6 L791.4 408.6 L791.4 422 Z" fill="url(#gW)" stroke="#2e3138" stroke-width="0.9"/><path d="M775.6 413.4 L781.4 407.6" stroke="#6f93e0" stroke-width="1.8"/><path d="M776.4 444 L776.4 439 Q776.4 430.6 785 430.6 L791.4 430.6 L791.4 444 Z" fill="url(#gW)" stroke="#2e3138" stroke-width="0.9"/><path d="M775.6 436.4 Q777 430 783.4 429" fill="none" stroke="#6f93e0" stroke-width="1.8"/><path d="M775.6 466 L778 458.6 M789.4 458 L791.6 451.4" stroke="#e8e8e8" stroke-width="1.2"/><path d="M778 458.6 C780 452 782 454 783.6 458 C785 462 787.4 462.6 789.4 458" fill="none" stroke="#4d86e0" stroke-width="1.5"/><circle cx="778" cy="458.6" r="1.9" fill="#16233f" stroke="#6f93e0" stroke-width="0.7"/><circle cx="789.4" cy="458" r="1.9" fill="#16233f" stroke="#6f93e0" stroke-width="0.7"/><path d="M776 480 L779 477.6 L779 486 L776 488.4 Z" fill="#dfeafa" stroke="#47649a" stroke-width="0.5"/><path d="M788.6 478 L791.6 475.6 L791.6 484 L788.6 486.4 Z" fill="#dfeafa" stroke="#47649a" stroke-width="0.5"/><path d="M780 476.4 L783 474 L790 474 L787 476.4 Z" fill="#eef4fc" stroke="#47649a" stroke-width="0.5"/><rect x="780" y="480" width="7.4" height="8.6" fill="#a9c6ee" stroke="#35558c" stroke-width="0.7"/><path d="M780 480 L782.4 478 L789.6 478 L787.4 480 Z" fill="#dfeafa" stroke="#35558c" stroke-width="0.5"/><path d="M787.4 480 L789.6 478 L789.6 486.4 L787.4 488.6 Z" fill="#7fa3da" stroke="#35558c" stroke-width="0.5"/><rect x="772" y="494" width="24" height="8" fill="#575757"/><rect x="775" y="496" width="1" height="1" fill="#0c0c0c"/><rect x="775" y="497" width="1" height="1" fill="#7a7a7a"/><rect x="775" y="498" width="1" height="1" fill="#0c0c0c"/><rect x="775" y="499" width="1" height="1" fill="#7a7a7a"/><rect x="777" y="496" width="1" height="1" fill="#0c0c0c"/><rect x="777" y="497" width="1" height="1" fill="#7a7a7a"/><rect x="777" y="498" width="1" height="1" fill="#0c0c0c"/><rect x="777" y="499" width="1" height="1" fill="#7a7a7a"/><rect x="779" y="496" width="1" height="1" fill="#0c0c0c"/><rect x="779" y="497" width="1" height="1" fill="#7a7a7a"/><rect x="779" y="498" width="1" height="1" fill="#0c0c0c"/><rect x="779" y="499" width="1" height="1" fill="#7a7a7a"/><rect x="781" y="496" width="1" height="1" fill="#0c0c0c"/><rect x="781" y="497" width="1" height="1" fill="#7a7a7a"/><rect x="781" y="498" width="1" height="1" fill="#0c0c0c"/><rect x="781" y="499" width="1" height="1" fill="#7a7a7a"/><rect x="783" y="496" width="1" height="1" fill="#0c0c0c"/><rect x="783" y="497" width="1" height="1" fill="#7a7a7a"/><rect x="783" y="498" width="1" height="1" fill="#0c0c0c"/><rect x="783" y="499" width="1" height="1" fill="#7a7a7a"/><rect x="785" y="496" width="1" height="1" fill="#0c0c0c"/><rect x="785" y="497" width="1" height="1" fill="#7a7a7a"/><rect x="785" y="498" width="1" height="1" fill="#0c0c0c"/><rect x="785" y="499" width="1" height="1" fill="#7a7a7a"/><rect x="787" y="496" width="1" height="1" fill="#0c0c0c"/><rect x="787" y="497" width="1" height="1" fill="#7a7a7a"/><rect x="787" y="498" width="1" height="1" fill="#0c0c0c"/><rect x="787" y="499" width="1" height="1" fill="#7a7a7a"/><path d="M776 510 L776 505.8 L785.4 505.8 L785.4 508.6 L778 508.6 L778 510 Z" fill="#fafafa"/><path d="M778.4 509.4 L788 509.4" stroke="#222" stroke-width="0.8"/><path d="M348.5 121.5 L477.5 121.5 L477.5 160.5 L394.5 160.5 C366 161 345 178 343.5 206.5 L327.5 206.5 L327.5 142.5 A21 21 0 0 1 348.5 121.5 Z" fill="none" stroke="#ffffff" stroke-width="1" shape-rendering="crispEdges"/><path d="M327.5 397.5 L343.5 397.5 C345 426 366 443 394.5 443.5 L477.5 443.5 L477.5 482.5 L348.5 482.5 A21 21 0 0 1 327.5 461.5 Z" fill="none" stroke="#ffffff" stroke-width="1" shape-rendering="crispEdges"/><rect x="77" y="409" width="6.4" height="50" fill="#5caa5c"/><path d="M77 409.4 L80.2 407.6 L83.4 409.4 Z" fill="#5caa5c"/><rect x="77" y="409" width="1.6" height="50" fill="#4a9550"/><rect x="81.6" y="409" width="1.8" height="50" fill="#4a9550"/><rect x="82" y="455.6" width="47" height="6.4" fill="#c8645f"/><path d="M129 455.6 L131 458.8 L129 462 Z" fill="#c8645f"/><rect x="82" y="455.6" width="47" height="1.4" fill="#d98a84"/><rect x="82" y="460.4" width="47" height="1.6" fill="#a04a48"/><rect x="77.2" y="455.4" width="6" height="6.4" fill="#8fa8d8"/><text x="77" y="408.2" font-family="Liberation Sans, sans-serif" font-size="16.6" fill="#2fb02f" stroke="#212830" stroke-width="0.7" textLength="12.4" lengthAdjust="spacingAndGlyphs">Y</text><text x="123.6" y="455.4" font-family="Liberation Sans, sans-serif" font-size="16.6" fill="#e8484a" stroke="#212830" stroke-width="0.7" textLength="12.6" lengthAdjust="spacingAndGlyphs">X</text><text x="77" y="455.6" font-family="Liberation Sans, sans-serif" font-size="17" fill="#2f78e8" stroke="#212830" stroke-width="0.6" textLength="13" lengthAdjust="spacingAndGlyphs">Z</text><rect x="705.4" y="102.6" width="10.6" height="3" fill="#f4f4f4"/><path d="M728.5 98.5 L734.5 98.5 L734.5 104.5" fill="none" stroke="#f4f4f4" stroke-width="1.4"/><rect x="726.2" y="100.4" width="6" height="5.6" fill="none" stroke="#f4f4f4" stroke-width="1.8"/><text x="750.2" y="105.8" text-anchor="middle" font-family="Liberation Sans, sans-serif" font-weight="bold" font-size="13.5" fill="#f4f4f4" stroke="#f4f4f4" stroke-width="0.6">x</text><rect x="4" y="517" width="2" height="2" fill="#a8a8a8"/><rect x="4" y="520" width="2" height="2" fill="#a8a8a8"/><rect x="7" y="517" width="2" height="2" fill="#a8a8a8"/><rect x="7" y="520" width="2" height="2" fill="#a8a8a8"/><rect x="10" y="517" width="2" height="2" fill="#a8a8a8"/><rect x="10" y="520" width="2" height="2" fill="#a8a8a8"/><rect x="13" y="517" width="2" height="2" fill="#a8a8a8"/><rect x="13" y="520" width="2" height="2" fill="#a8a8a8"/><rect x="16" y="517" width="2" height="2" fill="#a8a8a8"/><rect x="16" y="520" width="2" height="2" fill="#a8a8a8"/><rect x="19" y="517" width="2" height="2" fill="#a8a8a8"/><rect x="19" y="520" width="2" height="2" fill="#a8a8a8"/><path d="M7.6 530.8 L16.6 537.8 M16.6 530.8 L7.6 537.8" stroke="#f4f4f4" stroke-width="2.3"/><path d="M11.4 555.8 L17.6 562" stroke="#f4f4f4" stroke-width="2.8" stroke-linecap="round"/><circle cx="9.8" cy="554.2" r="3.9" fill="#f4f4f4"/><path d="M9.9 554 L7.6 548.8" stroke="#484848" stroke-width="2.7"/><path d="M13.4 559.2 L16.6 562.4" stroke="#8a8a8a" stroke-width="0.8"/><rect x="29.4" y="550.6" width="14.4" height="13.6" rx="1.5" fill="#e4e4e6" stroke="#8a8a8a" stroke-width="0.9"/><path d="M32.2 554.4 L36 557.4 L32.2 560.4" fill="none" stroke="#222" stroke-width="1.4"/><path d="M37.4 561 L41.4 561" stroke="#222" stroke-width="1.4"/><path d="M47.4 556.6 L53 556.6 L50.2 559.8 Z" fill="#8c8c8c"/><path d="M328.5 572 L328.5 596" stroke="#727272" stroke-width="1"/><path d="M327.5 572 L327.5 596" stroke="#3a3a3a" stroke-width="1"/><path d="M430.5 572 L430.5 596" stroke="#727272" stroke-width="1"/><path d="M429.5 572 L429.5 596" stroke="#3a3a3a" stroke-width="1"/><path d="M493.5 572 L493.5 596" stroke="#727272" stroke-width="1"/><path d="M492.5 572 L492.5 596" stroke="#3a3a3a" stroke-width="1"/><path d="M519.5 572 L519.5 596" stroke="#727272" stroke-width="1"/><path d="M518.5 572 L518.5 596" stroke="#3a3a3a" stroke-width="1"/><path d="M547.5 572 L547.5 596" stroke="#727272" stroke-width="1"/><path d="M546.5 572 L546.5 596" stroke="#3a3a3a" stroke-width="1"/><path d="M655.5 572 L655.5 596" stroke="#727272" stroke-width="1"/><path d="M654.5 572 L654.5 596" stroke="#3a3a3a" stroke-width="1"/><path d="M697.5 572 L697.5 596" stroke="#727272" stroke-width="1"/><path d="M696.5 572 L696.5 596" stroke="#3a3a3a" stroke-width="1"/><path d="M722.5 572 L722.5 596" stroke="#727272" stroke-width="1"/><path d="M721.5 572 L721.5 596" stroke="#3a3a3a" stroke-width="1"/><path d="M750.5 572 L750.5 596" stroke="#727272" stroke-width="1"/><path d="M749.5 572 L749.5 596" stroke="#3a3a3a" stroke-width="1"/><path d="M777.5 572 L777.5 596" stroke="#727272" stroke-width="1"/><path d="M776.5 572 L776.5 596" stroke="#3a3a3a" stroke-width="1"/><path d="M310 577.6 L310 584.6 M306.6 581 L313.4 581" stroke="#ececec" stroke-width="1.2"/><rect x="313" y="585.6" width="10" height="3.6" rx="1" fill="#e0e0e0"/><path d="M335.4 577.6 L335.4 590.4 L347.6 590.4" fill="none" stroke="#2f8cf0" stroke-width="1.4"/><path d="M335.4 586.4 L339.4 586.4 L339.4 590.4" fill="none" stroke="#2f8cf0" stroke-width="1.1"/><circle cx="364" cy="584.4" r="6.4" fill="none" stroke="#ececec" stroke-width="1.2"/><path d="M364 584.4 L372 584.4 M364 584.4 L370.6 577" stroke="#ececec" stroke-width="1.1"/><path d="M380.0 583.4 L386.79999999999995 583.4 L383.4 587.1999999999999 Z" fill="#ececec"/><path d="M395.6 575 L411.4 592.4" stroke="#a4a4a4" stroke-width="1.4"/><path d="M403.6 574 L403.6 593" stroke="#d0d0d0" stroke-width="1"/><rect x="402.4" y="582.4" width="2.4" height="2.4" fill="#4e4e4e" stroke="#d0d0d0" stroke-width="0.6"/><path d="M419.0 583.4 L425.79999999999995 583.4 L422.4 587.1999999999999 Z" fill="#ececec"/><path d="M449 578 L435.4 590.8 L450.6 590.8" fill="none" stroke="#2f8cf0" stroke-width="1.4"/><rect x="440.4" y="583.4" width="3" height="3" fill="#2f8cf0"/><rect x="459.6" y="578.6" width="12.4" height="12.4" fill="none" stroke="#2f8cf0" stroke-width="1.4"/><rect x="457.6" y="576.4" width="4" height="4" fill="#27d827" stroke="#0a3a0a" stroke-width="0.9"/><path d="M483.0 583.4 L489.79999999999995 583.4 L486.4 587.1999999999999 Z" fill="#ececec"/><rect x="498.6" y="576.4" width="16" height="1.6" fill="#ececec"/><rect x="498.6" y="581" width="16" height="3" fill="#ececec"/><rect x="498.6" y="587" width="9" height="3.6" fill="#cfcfcf"/><rect x="507.6" y="588" width="7" height="1.2" fill="#cfcfcf"/><path d="M527.6 576 L527.6 591 L542 591" fill="none" stroke="#ececec" stroke-width="1.1"/><path d="M525.8 578.4 L527.6 575.4 L529.4 578.4 Z M539.8 589.2 L542.8 591 L539.8 592.8 Z" fill="#ececec"/><path d="M528.6 590 L535 583.6" stroke="#ececec" stroke-width="1"/><path d="M538.4 576.4 L534.6 581.6 L537.6 581.6 L535.6 586 L541 580 L538 580 L540.4 576.4 Z" fill="#ececec"/><path d="M560.8 576.2 L563.1999999999999 576.6 L563.8 583 Q567.6 586 569.6 591.6 Q564.4 591.8 561.6 586.8 Q558.8 591.8 553.4 591.6 Q555.4 586 559.4 583 Z" fill="#2f8cf0"/><circle cx="565.6" cy="579" r="3" fill="#4e4e4e" stroke="#2f8cf0" stroke-width="1.2"/><path d="M584.4 576.2 L586.8 576.6 L587.4 583 Q591.2 586 593.2 591.6 Q588 591.8 585.2 586.8 Q582.4 591.8 577 591.6 Q579 586 583 583 Z" fill="#c2c2c2"/><path d="M589.6 576.4 L586.4 581.4 L588.8 581.4 L587 586 L592 580 L589.6 580 L591.6 576.4 Z" fill="#e4e4e4" stroke="#4e4e4e" stroke-width="0.5"/><path d="M607.4 576.2 L609.8 576.6 L610.4 583 Q614.2 586 616.2 591.6 Q611 591.8 608.2 586.8 Q605.4 591.8 600 591.6 Q602 586 606 583 Z" fill="#c2c2c2"/><text x="627" y="590" font-family="Liberation Sans, sans-serif" font-size="11" fill="#d8d8d8">1:1</text><path d="M643.0 583.4 L649.8 583.4 L646.4 587.1999999999999 Z" fill="#ececec"/><circle cx="668" cy="584.4" r="4.2" fill="none" stroke="#c8c8c8" stroke-width="3" stroke-dasharray="2.2 1.1"/><path d="M686.0 583.4 L692.8 583.4 L689.4 587.1999999999999 Z" fill="#ececec"/><path d="M709.6 578 L709.6 591 M703 584.4 L716 584.4" stroke="#ececec" stroke-width="1.6"/><rect x="731.6" y="578" width="8.6" height="12" fill="none" stroke="#ececec" stroke-width="1"/><path d="M733.6 582.4 L738.4 582.4 M733.6 585 L738.4 585 M733.6 587.6 L738.4 587.6" stroke="#ececec" stroke-width="1" stroke-dasharray="1.2 0.6"/><rect x="757.6" y="577.4" width="5.6" height="5.6" fill="none" stroke="#ececec" stroke-width="1"/><circle cx="768" cy="581" r="2.8" fill="none" stroke="#ececec" stroke-width="1"/><path d="M762.4 585.4 L766 591.6 L758.8 591.6 Z" fill="none" stroke="#ececec" stroke-width="1"/><rect x="778" y="572" width="22" height="25" fill="#1e1e1e"/><circle cx="790.6" cy="585" r="9.6" fill="#2a74d6" stroke="#4f9af4" stroke-width="1"/><path d="M786.6 589.4 L795 581" stroke="#dbe9ff" stroke-width="1.2"/><rect x="0" y="598" width="800" height="2" fill="#161616"/><rect x="303" y="598.8" width="7.0" height="1.2" fill="#b0b0b0"/><rect x="318" y="598.8" width="9.8" height="1.2" fill="#b0b0b0"/><rect x="340" y="598.8" width="4.2" height="1.2" fill="#b0b0b0"/><rect x="352" y="598.8" width="8.4" height="1.2" fill="#b0b0b0"/><rect x="372" y="598.8" width="2.8" height="1.2" fill="#b0b0b0"/><rect x="384" y="598.8" width="7.0" height="1.2" fill="#b0b0b0"/><rect x="404" y="598.8" width="5.6" height="1.2" fill="#b0b0b0"/><rect x="420" y="598.8" width="8.4" height="1.2" fill="#b0b0b0"/><rect x="440" y="598.8" width="9.8" height="1.2" fill="#b0b0b0"/><rect x="462" y="598.8" width="5.6" height="1.2" fill="#b0b0b0"/><rect x="478" y="598.8" width="7.0" height="1.2" fill="#b0b0b0"/><rect x="498" y="598.8" width="9.8" height="1.2" fill="#b0b0b0"/><rect x="520" y="598.8" width="4.2" height="1.2" fill="#b0b0b0"/><rect x="534" y="598.8" width="8.4" height="1.2" fill="#b0b0b0"/><rect x="556" y="598.8" width="7.0" height="1.2" fill="#b0b0b0"/><rect x="574" y="598.8" width="5.6" height="1.2" fill="#b0b0b0"/><rect x="590" y="598.8" width="9.8" height="1.2" fill="#b0b0b0"/><rect x="612" y="598.8" width="7.0" height="1.2" fill="#b0b0b0"/><rect x="630" y="598.8" width="5.6" height="1.2" fill="#b0b0b0"/><rect x="648" y="598.8" width="8.4" height="1.2" fill="#b0b0b0"/><rect x="668" y="598.8" width="5.6" height="1.2" fill="#b0b0b0"/><rect x="684" y="598.8" width="8.4" height="1.2" fill="#b0b0b0"/><rect x="704" y="598.8" width="7.0" height="1.2" fill="#b0b0b0"/><rect x="724" y="598.8" width="5.6" height="1.2" fill="#b0b0b0"/><rect x="740" y="598.8" width="9.8" height="1.2" fill="#b0b0b0"/><rect x="762" y="598.8" width="5.6" height="1.2" fill="#b0b0b0"/>
</svg>
<div class="abs" id="wm"><b>头条</b> @小黄花CAD</div>
</body></html>
